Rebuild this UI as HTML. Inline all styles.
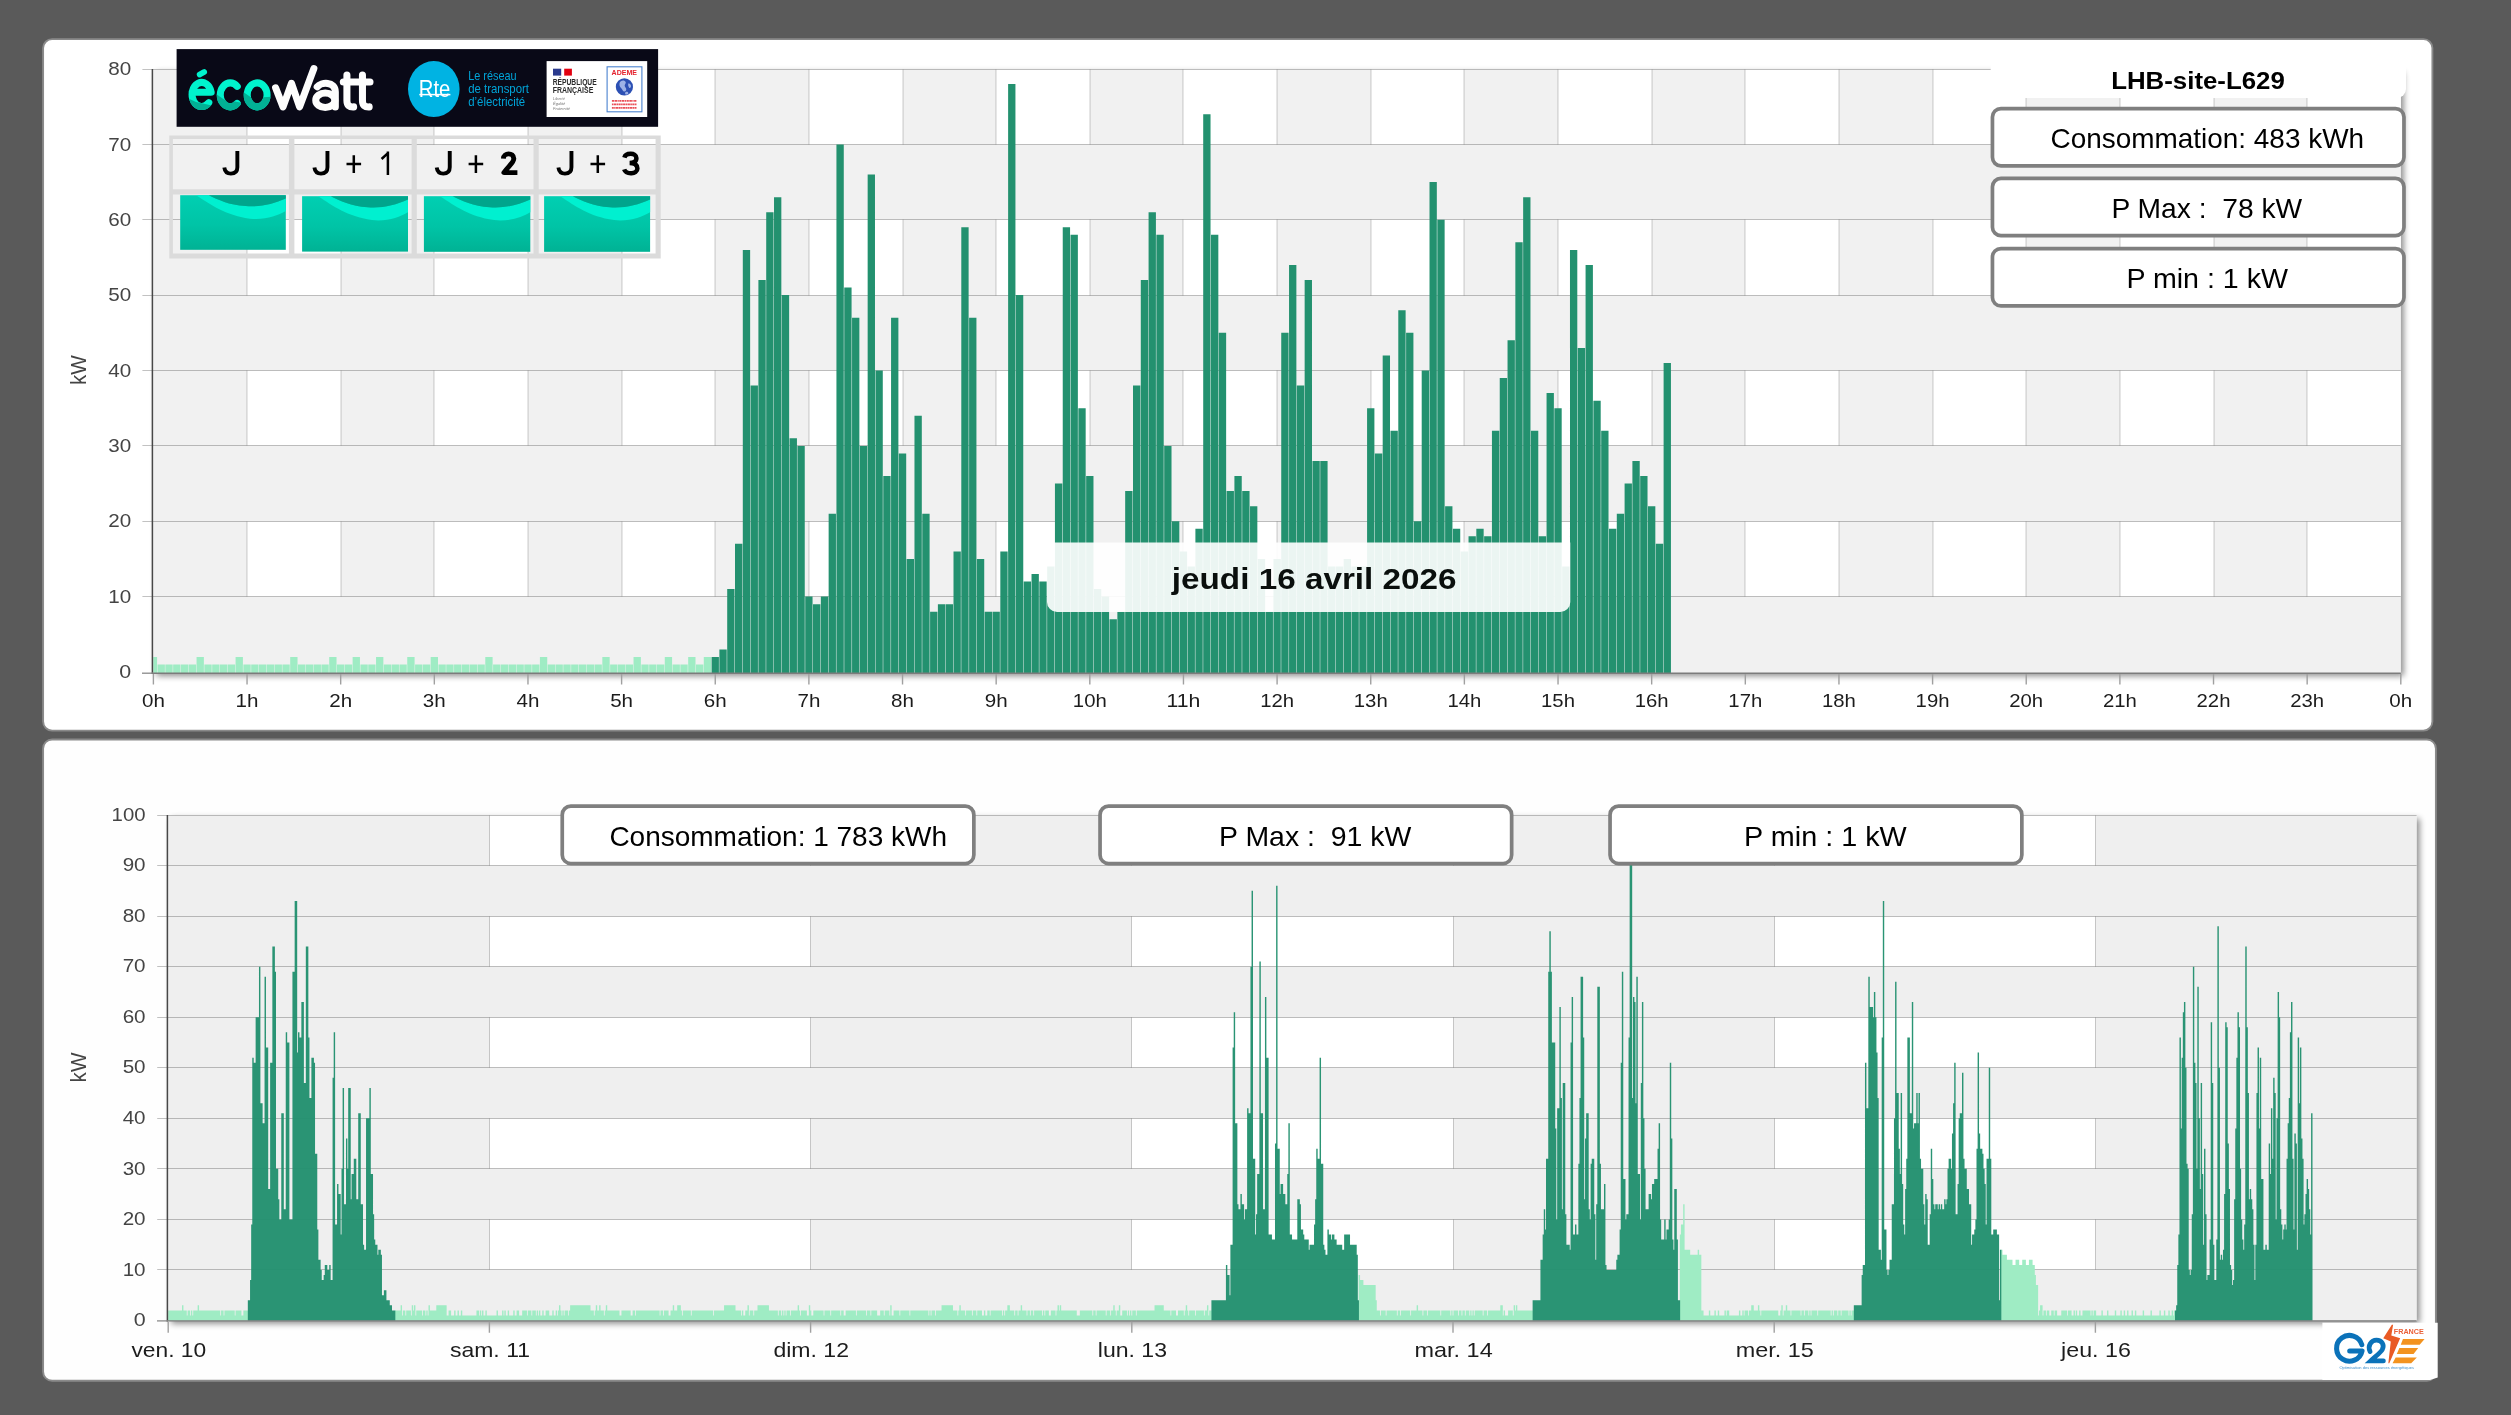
<!DOCTYPE html>
<html><head><meta charset="utf-8"><title>LHB-site-L629</title>
<style>
html,body{margin:0;padding:0;background:#5a5a5a;}
body{width:2511px;height:1415px;overflow:hidden;position:relative;font-family:"Liberation Sans",sans-serif;}
svg{position:absolute;left:0;top:0;display:block;will-change:transform}
</style></head><body>
<svg width="2511" height="1415" viewBox="0 0 2511 1415" font-family="Liberation Sans, sans-serif">
<defs>
<filter id="sh" x="-2%" y="-4%" width="104%" height="110%"><feGaussianBlur in="SourceAlpha" stdDeviation="3.4"/><feOffset dx="3" dy="3"/><feComponentTransfer><feFuncA type="linear" slope="0.45"/></feComponentTransfer><feMerge><feMergeNode/><feMergeNode in="SourceGraphic"/></feMerge></filter>
</defs>
<rect width="2511" height="1415" fill="#5a5a5a"/>

<rect x="43.1" y="39.1" width="2389.3" height="691.5" rx="9" fill="#fff" stroke="#8a8a8a" stroke-width="1.9"/>
<rect x="43.1" y="739.5" width="2392.8" height="641.3" rx="9" fill="#fefefe" stroke="#8a8a8a" stroke-width="1.9"/>
<g id="topgrid">
<rect x="153.4" y="69.5" width="2247.4" height="603.5" fill="#f1f1f1" filter="url(#sh)"/>
<path d="M247,69.5H341V144.5H247zM434,69.5H528V144.5H434zM622,69.5H715V144.5H622zM809,69.5H903V144.5H809zM996,69.5H1090V144.5H996zM1183,69.5H1277V144.5H1183zM1371,69.5H1464V144.5H1371zM1558,69.5H1652V144.5H1558zM1745,69.5H1839V144.5H1745zM1933,69.5H2026V144.5H1933zM2120,69.5H2214V144.5H2120zM2307,69.5H2400.8V144.5H2307zM247,219.5H341V295.5H247zM434,219.5H528V295.5H434zM622,219.5H715V295.5H622zM809,219.5H903V295.5H809zM996,219.5H1090V295.5H996zM1183,219.5H1277V295.5H1183zM1371,219.5H1464V295.5H1371zM1558,219.5H1652V295.5H1558zM1745,219.5H1839V295.5H1745zM1933,219.5H2026V295.5H1933zM2120,219.5H2214V295.5H2120zM2307,219.5H2400.8V295.5H2307zM247,370.5H341V445.5H247zM434,370.5H528V445.5H434zM622,370.5H715V445.5H622zM809,370.5H903V445.5H809zM996,370.5H1090V445.5H996zM1183,370.5H1277V445.5H1183zM1371,370.5H1464V445.5H1371zM1558,370.5H1652V445.5H1558zM1745,370.5H1839V445.5H1745zM1933,370.5H2026V445.5H1933zM2120,370.5H2214V445.5H2120zM2307,370.5H2400.8V445.5H2307zM247,521.5H341V596.5H247zM434,521.5H528V596.5H434zM622,521.5H715V596.5H622zM809,521.5H903V596.5H809zM996,521.5H1090V596.5H996zM1183,521.5H1277V596.5H1183zM1371,521.5H1464V596.5H1371zM1558,521.5H1652V596.5H1558zM1745,521.5H1839V596.5H1745zM1933,521.5H2026V596.5H1933zM2120,521.5H2214V596.5H2120zM2307,521.5H2400.8V596.5H2307z" fill="#fff"/>
<path d="M247,69.5V144.5M341,69.5V144.5M434,69.5V144.5M528,69.5V144.5M622,69.5V144.5M715,69.5V144.5M809,69.5V144.5M903,69.5V144.5M996,69.5V144.5M1090,69.5V144.5M1183,69.5V144.5M1277,69.5V144.5M1371,69.5V144.5M1464,69.5V144.5M1558,69.5V144.5M1652,69.5V144.5M1745,69.5V144.5M1839,69.5V144.5M1933,69.5V144.5M2026,69.5V144.5M2120,69.5V144.5M2214,69.5V144.5M2307,69.5V144.5M247,219.5V295.5M341,219.5V295.5M434,219.5V295.5M528,219.5V295.5M622,219.5V295.5M715,219.5V295.5M809,219.5V295.5M903,219.5V295.5M996,219.5V295.5M1090,219.5V295.5M1183,219.5V295.5M1277,219.5V295.5M1371,219.5V295.5M1464,219.5V295.5M1558,219.5V295.5M1652,219.5V295.5M1745,219.5V295.5M1839,219.5V295.5M1933,219.5V295.5M2026,219.5V295.5M2120,219.5V295.5M2214,219.5V295.5M2307,219.5V295.5M247,370.5V445.5M341,370.5V445.5M434,370.5V445.5M528,370.5V445.5M622,370.5V445.5M715,370.5V445.5M809,370.5V445.5M903,370.5V445.5M996,370.5V445.5M1090,370.5V445.5M1183,370.5V445.5M1277,370.5V445.5M1371,370.5V445.5M1464,370.5V445.5M1558,370.5V445.5M1652,370.5V445.5M1745,370.5V445.5M1839,370.5V445.5M1933,370.5V445.5M2026,370.5V445.5M2120,370.5V445.5M2214,370.5V445.5M2307,370.5V445.5M247,521.5V596.5M341,521.5V596.5M434,521.5V596.5M528,521.5V596.5M622,521.5V596.5M715,521.5V596.5M809,521.5V596.5M903,521.5V596.5M996,521.5V596.5M1090,521.5V596.5M1183,521.5V596.5M1277,521.5V596.5M1371,521.5V596.5M1464,521.5V596.5M1558,521.5V596.5M1652,521.5V596.5M1745,521.5V596.5M1839,521.5V596.5M1933,521.5V596.5M2026,521.5V596.5M2120,521.5V596.5M2214,521.5V596.5M2307,521.5V596.5" stroke="#000" stroke-opacity="0.2" stroke-width="1" fill="none"/>
<path d="M142.40,69.5H2400.80M142.40,144.5H2400.80M142.40,219.5H2400.80M142.40,295.5H2400.80M142.40,370.5H2400.80M142.40,445.5H2400.80M142.40,521.5H2400.80M142.40,596.5H2400.80" stroke="#000" stroke-opacity="0.24" stroke-width="1" fill="none"/>
</g>
<path d="M153.30,673.0V656.92H157.06V673.0zM157.54,673.0V664.46H164.87V673.0zM165.35,673.0V664.46H172.67V673.0zM173.15,673.0V664.46H180.47V673.0zM180.95,673.0V664.46H188.28V673.0zM188.76,673.0V664.46H196.08V673.0zM196.56,673.0V656.92H203.88V673.0zM204.36,673.0V664.46H211.69V673.0zM212.17,673.0V664.46H219.49V673.0zM219.97,673.0V664.46H227.29V673.0zM227.77,673.0V664.46H235.10V673.0zM235.58,673.0V656.92H242.90V673.0zM243.38,673.0V664.46H250.70V673.0zM251.18,673.0V664.46H258.51V673.0zM258.99,673.0V664.46H266.31V673.0zM266.79,673.0V664.46H274.11V673.0zM274.59,673.0V664.46H281.92V673.0zM282.40,673.0V664.46H289.72V673.0zM290.20,673.0V656.92H297.52V673.0zM298.00,673.0V664.46H305.33V673.0zM305.81,673.0V664.46H313.13V673.0zM313.61,673.0V664.46H320.93V673.0zM321.41,673.0V664.46H328.74V673.0zM329.22,673.0V656.92H336.54V673.0zM337.02,673.0V664.46H344.35V673.0zM344.83,673.0V664.46H352.15V673.0zM352.63,673.0V656.92H359.95V673.0zM360.43,673.0V664.46H367.76V673.0zM368.24,673.0V664.46H375.56V673.0zM376.04,673.0V656.92H383.36V673.0zM383.84,673.0V664.46H391.17V673.0zM391.65,673.0V664.46H398.97V673.0zM399.45,673.0V664.46H406.77V673.0zM407.25,673.0V656.92H414.58V673.0zM415.06,673.0V664.46H422.38V673.0zM422.86,673.0V664.46H430.18V673.0zM430.66,673.0V656.92H437.99V673.0zM438.47,673.0V664.46H445.79V673.0zM446.27,673.0V664.46H453.59V673.0zM454.07,673.0V664.46H461.40V673.0zM461.88,673.0V664.46H469.20V673.0zM469.68,673.0V664.46H477.00V673.0zM477.48,673.0V664.46H484.81V673.0zM485.29,673.0V656.92H492.61V673.0zM493.09,673.0V664.46H500.41V673.0zM500.89,673.0V664.46H508.22V673.0zM508.70,673.0V664.46H516.02V673.0zM516.50,673.0V664.46H523.82V673.0zM524.30,673.0V664.46H531.63V673.0zM532.11,673.0V664.46H539.43V673.0zM539.91,673.0V656.92H547.24V673.0zM547.72,673.0V664.46H555.04V673.0zM555.52,673.0V664.46H562.84V673.0zM563.32,673.0V664.46H570.65V673.0zM571.13,673.0V664.46H578.45V673.0zM578.93,673.0V664.46H586.25V673.0zM586.73,673.0V664.46H594.06V673.0zM594.54,673.0V664.46H601.86V673.0zM602.34,673.0V656.92H609.66V673.0zM610.14,673.0V664.46H617.47V673.0zM617.95,673.0V664.46H625.27V673.0zM625.75,673.0V664.46H633.07V673.0zM633.55,673.0V656.92H640.88V673.0zM641.36,673.0V664.46H648.68V673.0zM649.16,673.0V664.46H656.48V673.0zM656.96,673.0V664.46H664.29V673.0zM664.77,673.0V656.92H672.09V673.0zM672.57,673.0V664.46H679.89V673.0zM680.37,673.0V664.46H687.70V673.0zM688.18,673.0V656.92H695.50V673.0zM695.98,673.0V664.46H703.30V673.0zM703.78,673.0V656.92H711.11V673.0z" fill="#9fecc4"/>
<path d="M711.59,673.0V656.92H718.91V673.0zM719.39,673.0V649.39H726.72V673.0zM727.20,673.0V589.09H734.52V673.0zM735.00,673.0V543.86H742.32V673.0zM742.80,673.0V249.90H750.13V673.0zM750.61,673.0V385.57H757.93V673.0zM758.41,673.0V280.05H765.73V673.0zM766.21,673.0V212.21H773.54V673.0zM774.02,673.0V197.14H781.34V673.0zM781.82,673.0V295.12H789.14V673.0zM789.62,673.0V438.34H796.95V673.0zM797.43,673.0V445.88H804.75V673.0zM805.23,673.0V596.62H812.55V673.0zM813.03,673.0V604.16H820.36V673.0zM820.84,673.0V596.62H828.16V673.0zM828.64,673.0V513.71H835.96V673.0zM836.44,673.0V144.38H843.77V673.0zM844.25,673.0V287.59H851.57V673.0zM852.05,673.0V317.74H859.37V673.0zM859.85,673.0V445.88H867.18V673.0zM867.66,673.0V174.53H874.98V673.0zM875.46,673.0V370.50H882.78V673.0zM883.26,673.0V476.02H890.59V673.0zM891.07,673.0V317.74H898.39V673.0zM898.87,673.0V453.41H906.20V673.0zM906.68,673.0V558.94H914.00V673.0zM914.48,673.0V415.73H921.80V673.0zM922.28,673.0V513.71H929.61V673.0zM930.09,673.0V611.70H937.41V673.0zM937.89,673.0V604.16H945.21V673.0zM945.69,673.0V604.16H953.02V673.0zM953.50,673.0V551.40H960.82V673.0zM961.30,673.0V227.29H968.62V673.0zM969.10,673.0V317.74H976.43V673.0zM976.91,673.0V558.94H984.23V673.0zM984.71,673.0V611.70H992.03V673.0zM992.51,673.0V611.70H999.84V673.0zM1000.32,673.0V551.40H1007.64V673.0zM1008.12,673.0V84.08H1015.44V673.0zM1015.92,673.0V295.12H1023.25V673.0zM1023.73,673.0V581.55H1031.05V673.0zM1031.53,673.0V574.01H1038.85V673.0zM1039.33,673.0V581.55H1046.66V673.0zM1047.14,673.0V566.48H1054.46V673.0zM1054.94,673.0V483.56H1062.26V673.0zM1062.74,673.0V227.29H1070.07V673.0zM1070.55,673.0V234.83H1077.87V673.0zM1078.35,673.0V408.19H1085.67V673.0zM1086.15,673.0V476.02H1093.48V673.0zM1093.96,673.0V589.09H1101.28V673.0zM1101.76,673.0V596.62H1109.09V673.0zM1109.57,673.0V619.24H1116.89V673.0zM1117.37,673.0V611.70H1124.69V673.0zM1125.17,673.0V491.10H1132.50V673.0zM1132.98,673.0V385.57H1140.30V673.0zM1140.78,673.0V280.05H1148.10V673.0zM1148.58,673.0V212.21H1155.91V673.0zM1156.39,673.0V234.83H1163.71V673.0zM1164.19,673.0V445.88H1171.51V673.0zM1171.99,673.0V521.25H1179.32V673.0zM1179.80,673.0V551.40H1187.12V673.0zM1187.60,673.0V566.48H1194.92V673.0zM1195.40,673.0V528.79H1202.73V673.0zM1203.21,673.0V114.23H1210.53V673.0zM1211.01,673.0V234.83H1218.33V673.0zM1218.81,673.0V332.81H1226.14V673.0zM1226.62,673.0V491.10H1233.94V673.0zM1234.42,673.0V476.02H1241.74V673.0zM1242.22,673.0V491.10H1249.55V673.0zM1250.03,673.0V506.18H1257.35V673.0zM1257.83,673.0V558.94H1265.15V673.0zM1265.63,673.0V611.70H1272.96V673.0zM1273.44,673.0V558.94H1280.76V673.0zM1281.24,673.0V332.81H1288.57V673.0zM1289.05,673.0V264.98H1296.37V673.0zM1296.85,673.0V385.57H1304.17V673.0zM1304.65,673.0V280.05H1311.98V673.0zM1312.46,673.0V460.95H1319.78V673.0zM1320.26,673.0V460.95H1327.58V673.0zM1328.06,673.0V566.48H1335.39V673.0zM1335.87,673.0V566.48H1343.19V673.0zM1343.67,673.0V558.94H1350.99V673.0zM1351.47,673.0V566.48H1358.80V673.0zM1359.28,673.0V566.48H1366.60V673.0zM1367.08,673.0V408.19H1374.40V673.0zM1374.88,673.0V453.41H1382.21V673.0zM1382.69,673.0V355.43H1390.01V673.0zM1390.49,673.0V430.80H1397.81V673.0zM1398.29,673.0V310.20H1405.62V673.0zM1406.10,673.0V332.81H1413.42V673.0zM1413.90,673.0V521.25H1421.22V673.0zM1421.70,673.0V370.50H1429.03V673.0zM1429.51,673.0V182.06H1436.83V673.0zM1437.31,673.0V219.75H1444.63V673.0zM1445.11,673.0V506.18H1452.44V673.0zM1452.92,673.0V528.79H1460.24V673.0zM1460.72,673.0V551.40H1468.05V673.0zM1468.53,673.0V536.33H1475.85V673.0zM1476.33,673.0V528.79H1483.65V673.0zM1484.13,673.0V536.33H1491.46V673.0zM1491.94,673.0V430.80H1499.26V673.0zM1499.74,673.0V378.04H1507.06V673.0zM1507.54,673.0V340.35H1514.87V673.0zM1515.35,673.0V242.36H1522.67V673.0zM1523.15,673.0V197.14H1530.47V673.0zM1530.95,673.0V430.80H1538.28V673.0zM1538.76,673.0V536.33H1546.08V673.0zM1546.56,673.0V393.11H1553.88V673.0zM1554.36,673.0V408.19H1561.69V673.0zM1562.17,673.0V566.48H1569.49V673.0zM1569.97,673.0V249.90H1577.29V673.0zM1577.77,673.0V347.89H1585.10V673.0zM1585.58,673.0V264.98H1592.90V673.0zM1593.38,673.0V400.65H1600.70V673.0zM1601.18,673.0V430.80H1608.51V673.0zM1608.99,673.0V528.79H1616.31V673.0zM1616.79,673.0V513.71H1624.11V673.0zM1624.59,673.0V483.56H1631.92V673.0zM1632.40,673.0V460.95H1639.72V673.0zM1640.20,673.0V476.02H1647.52V673.0zM1648.00,673.0V506.18H1655.33V673.0zM1655.81,673.0V543.86H1663.13V673.0zM1663.61,673.0V362.96H1670.94V673.0z" fill="#23916f"/>
<path d="M152.4,69.0V673.7" stroke="#484848" stroke-width="1.5" fill="none"/>
<path d="M142,673.2H153" stroke="#8a8a8a" stroke-width="1.3" fill="none"/>
<path d="M151.7,673.2H2400.8" stroke="#7c7c7c" stroke-width="1.4" fill="none"/>
<path d="M153.40,674.0v10.5M247.04,674.0v10.5M340.68,674.0v10.5M434.33,674.0v10.5M527.97,674.0v10.5M621.61,674.0v10.5M715.25,674.0v10.5M808.89,674.0v10.5M902.53,674.0v10.5M996.17,674.0v10.5M1089.82,674.0v10.5M1183.46,674.0v10.5M1277.10,674.0v10.5M1370.74,674.0v10.5M1464.38,674.0v10.5M1558.03,674.0v10.5M1651.67,674.0v10.5M1745.31,674.0v10.5M1838.95,674.0v10.5M1932.59,674.0v10.5M2026.23,674.0v10.5M2119.88,674.0v10.5M2213.52,674.0v10.5M2307.16,674.0v10.5M2400.80,674.0v10.5" stroke="#a0a0a0" stroke-width="1.4" fill="none"/>
<text x="153.40" y="707.00" font-size="17.8" text-anchor="middle" fill="#1c1c1c" textLength="22.89" lengthAdjust="spacingAndGlyphs">0h</text>
<text x="247.04" y="707.00" font-size="17.8" text-anchor="middle" fill="#1c1c1c" textLength="22.89" lengthAdjust="spacingAndGlyphs">1h</text>
<text x="340.68" y="707.00" font-size="17.8" text-anchor="middle" fill="#1c1c1c" textLength="22.89" lengthAdjust="spacingAndGlyphs">2h</text>
<text x="434.33" y="707.00" font-size="17.8" text-anchor="middle" fill="#1c1c1c" textLength="22.89" lengthAdjust="spacingAndGlyphs">3h</text>
<text x="527.97" y="707.00" font-size="17.8" text-anchor="middle" fill="#1c1c1c" textLength="22.89" lengthAdjust="spacingAndGlyphs">4h</text>
<text x="621.61" y="707.00" font-size="17.8" text-anchor="middle" fill="#1c1c1c" textLength="22.89" lengthAdjust="spacingAndGlyphs">5h</text>
<text x="715.25" y="707.00" font-size="17.8" text-anchor="middle" fill="#1c1c1c" textLength="22.89" lengthAdjust="spacingAndGlyphs">6h</text>
<text x="808.89" y="707.00" font-size="17.8" text-anchor="middle" fill="#1c1c1c" textLength="22.89" lengthAdjust="spacingAndGlyphs">7h</text>
<text x="902.53" y="707.00" font-size="17.8" text-anchor="middle" fill="#1c1c1c" textLength="22.89" lengthAdjust="spacingAndGlyphs">8h</text>
<text x="996.17" y="707.00" font-size="17.8" text-anchor="middle" fill="#1c1c1c" textLength="22.89" lengthAdjust="spacingAndGlyphs">9h</text>
<text x="1089.82" y="707.00" font-size="17.8" text-anchor="middle" fill="#1c1c1c" textLength="33.91" lengthAdjust="spacingAndGlyphs">10h</text>
<text x="1183.46" y="707.00" font-size="17.8" text-anchor="middle" fill="#1c1c1c" textLength="33.91" lengthAdjust="spacingAndGlyphs">11h</text>
<text x="1277.10" y="707.00" font-size="17.8" text-anchor="middle" fill="#1c1c1c" textLength="33.91" lengthAdjust="spacingAndGlyphs">12h</text>
<text x="1370.74" y="707.00" font-size="17.8" text-anchor="middle" fill="#1c1c1c" textLength="33.91" lengthAdjust="spacingAndGlyphs">13h</text>
<text x="1464.38" y="707.00" font-size="17.8" text-anchor="middle" fill="#1c1c1c" textLength="33.91" lengthAdjust="spacingAndGlyphs">14h</text>
<text x="1558.03" y="707.00" font-size="17.8" text-anchor="middle" fill="#1c1c1c" textLength="33.91" lengthAdjust="spacingAndGlyphs">15h</text>
<text x="1651.67" y="707.00" font-size="17.8" text-anchor="middle" fill="#1c1c1c" textLength="33.91" lengthAdjust="spacingAndGlyphs">16h</text>
<text x="1745.31" y="707.00" font-size="17.8" text-anchor="middle" fill="#1c1c1c" textLength="33.91" lengthAdjust="spacingAndGlyphs">17h</text>
<text x="1838.95" y="707.00" font-size="17.8" text-anchor="middle" fill="#1c1c1c" textLength="33.91" lengthAdjust="spacingAndGlyphs">18h</text>
<text x="1932.59" y="707.00" font-size="17.8" text-anchor="middle" fill="#1c1c1c" textLength="33.91" lengthAdjust="spacingAndGlyphs">19h</text>
<text x="2026.23" y="707.00" font-size="17.8" text-anchor="middle" fill="#1c1c1c" textLength="33.91" lengthAdjust="spacingAndGlyphs">20h</text>
<text x="2119.88" y="707.00" font-size="17.8" text-anchor="middle" fill="#1c1c1c" textLength="33.91" lengthAdjust="spacingAndGlyphs">21h</text>
<text x="2213.52" y="707.00" font-size="17.8" text-anchor="middle" fill="#1c1c1c" textLength="33.91" lengthAdjust="spacingAndGlyphs">22h</text>
<text x="2307.16" y="707.00" font-size="17.8" text-anchor="middle" fill="#1c1c1c" textLength="33.91" lengthAdjust="spacingAndGlyphs">23h</text>
<text x="2400.80" y="707.00" font-size="17.8" text-anchor="middle" fill="#1c1c1c" textLength="22.89" lengthAdjust="spacingAndGlyphs">0h</text>
<text x="131.20" y="678.20" font-size="17.8" text-anchor="end" fill="#444" textLength="11.92" lengthAdjust="spacingAndGlyphs">0</text>
<text x="131.20" y="602.83" font-size="17.8" text-anchor="end" fill="#444" textLength="22.94" lengthAdjust="spacingAndGlyphs">10</text>
<text x="131.20" y="527.45" font-size="17.8" text-anchor="end" fill="#444" textLength="22.94" lengthAdjust="spacingAndGlyphs">20</text>
<text x="131.20" y="452.07" font-size="17.8" text-anchor="end" fill="#444" textLength="22.94" lengthAdjust="spacingAndGlyphs">30</text>
<text x="131.20" y="376.70" font-size="17.8" text-anchor="end" fill="#444" textLength="22.94" lengthAdjust="spacingAndGlyphs">40</text>
<text x="131.20" y="301.32" font-size="17.8" text-anchor="end" fill="#444" textLength="22.94" lengthAdjust="spacingAndGlyphs">50</text>
<text x="131.20" y="225.95" font-size="17.8" text-anchor="end" fill="#444" textLength="22.94" lengthAdjust="spacingAndGlyphs">60</text>
<text x="131.20" y="150.57" font-size="17.8" text-anchor="end" fill="#444" textLength="22.94" lengthAdjust="spacingAndGlyphs">70</text>
<text x="131.20" y="75.20" font-size="17.8" text-anchor="end" fill="#444" textLength="22.94" lengthAdjust="spacingAndGlyphs">80</text>
<text transform="translate(85.9,370.2) rotate(-90)" font-size="22" text-anchor="middle" fill="#444" textLength="29.8" lengthAdjust="spacingAndGlyphs">kW</text>
<path d="M1047,542.5H1570.3V602a10,10 0 0 1 -10,10H1057a10,10 0 0 1 -10,-10z" fill="#fff" fill-opacity="0.91"/>
<text x="1314.20" y="588.70" font-size="30.3" text-anchor="middle" fill="#0a0f0d" font-weight="bold" textLength="284.80" lengthAdjust="spacingAndGlyphs">jeudi 16 avril 2026</text>
<g id="botgrid">
<rect x="168.2" y="815.5" width="2248.4" height="505.20000000000005" fill="#efefef" filter="url(#sh)"/>
<path d="M489.5,815.5H810.5V865.5H489.5zM1131.5,815.5H1453.5V865.5H1131.5zM1774.5,815.5H2095.5V865.5H1774.5zM489.5,916.5H810.5V966.5H489.5zM1131.5,916.5H1453.5V966.5H1131.5zM1774.5,916.5H2095.5V966.5H1774.5zM489.5,1017.5H810.5V1067.5H489.5zM1131.5,1017.5H1453.5V1067.5H1131.5zM1774.5,1017.5H2095.5V1067.5H1774.5zM489.5,1118.5H810.5V1168.5H489.5zM1131.5,1118.5H1453.5V1168.5H1131.5zM1774.5,1118.5H2095.5V1168.5H1774.5zM489.5,1219.5H810.5V1269.5H489.5zM1131.5,1219.5H1453.5V1269.5H1131.5zM1774.5,1219.5H2095.5V1269.5H1774.5z" fill="#fff"/>
<path d="M489.5,815.5V865.5M810.5,815.5V865.5M1131.5,815.5V865.5M1453.5,815.5V865.5M1774.5,815.5V865.5M2095.5,815.5V865.5M489.5,916.5V966.5M810.5,916.5V966.5M1131.5,916.5V966.5M1453.5,916.5V966.5M1774.5,916.5V966.5M2095.5,916.5V966.5M489.5,1017.5V1067.5M810.5,1017.5V1067.5M1131.5,1017.5V1067.5M1453.5,1017.5V1067.5M1774.5,1017.5V1067.5M2095.5,1017.5V1067.5M489.5,1118.5V1168.5M810.5,1118.5V1168.5M1131.5,1118.5V1168.5M1453.5,1118.5V1168.5M1774.5,1118.5V1168.5M2095.5,1118.5V1168.5M489.5,1219.5V1269.5M810.5,1219.5V1269.5M1131.5,1219.5V1269.5M1453.5,1219.5V1269.5M1774.5,1219.5V1269.5M2095.5,1219.5V1269.5" stroke="#000" stroke-opacity="0.2" stroke-width="1" fill="none"/>
<path d="M157.20,815.5H2416.60M157.20,865.5H2416.60M157.20,916.5H2416.60M157.20,966.5H2416.60M157.20,1017.5H2416.60M157.20,1067.5H2416.60M157.20,1118.5H2416.60M157.20,1168.5H2416.60M157.20,1219.5H2416.60M157.20,1269.5H2416.60" stroke="#000" stroke-opacity="0.24" stroke-width="1" fill="none"/>
</g>
<path d="M168.20,1320.7V1310.39H168.94V1320.7zM168.64,1320.7V1310.39H170.05V1320.7zM169.75,1320.7V1310.39H171.17V1320.7zM170.87,1320.7V1310.39H172.28V1320.7zM171.98,1320.7V1310.39H173.40V1320.7zM173.10,1320.7V1310.39H174.51V1320.7zM174.21,1320.7V1310.39H175.63V1320.7zM175.33,1320.7V1310.39H176.74V1320.7zM176.44,1320.7V1310.39H177.86V1320.7zM177.56,1320.7V1310.39H178.98V1320.7zM178.68,1320.7V1310.39H180.09V1320.7zM179.79,1320.7V1310.39H181.21V1320.7zM180.91,1320.7V1310.39H182.32V1320.7zM182.02,1320.7V1305.34H183.44V1320.7zM183.14,1320.7V1310.39H184.55V1320.7zM184.25,1320.7V1310.39H185.67V1320.7zM185.37,1320.7V1310.39H186.78V1320.7zM186.48,1320.7V1315.44H187.90V1320.7zM187.60,1320.7V1310.39H189.01V1320.7zM188.71,1320.7V1310.39H190.13V1320.7zM189.83,1320.7V1315.44H191.24V1320.7zM190.94,1320.7V1310.39H192.36V1320.7zM192.06,1320.7V1315.44H193.47V1320.7zM193.17,1320.7V1310.39H194.59V1320.7zM194.29,1320.7V1310.39H195.70V1320.7zM195.40,1320.7V1310.39H196.82V1320.7zM196.52,1320.7V1310.39H197.93V1320.7zM197.63,1320.7V1305.34H199.05V1320.7zM198.75,1320.7V1310.39H200.17V1320.7zM199.87,1320.7V1310.39H201.28V1320.7zM200.98,1320.7V1310.39H202.40V1320.7zM202.10,1320.7V1310.39H203.51V1320.7zM203.21,1320.7V1310.39H204.63V1320.7zM204.33,1320.7V1310.39H205.74V1320.7zM205.44,1320.7V1310.39H206.86V1320.7zM206.56,1320.7V1310.39H207.97V1320.7zM207.67,1320.7V1310.39H209.09V1320.7zM208.79,1320.7V1310.39H210.20V1320.7zM209.90,1320.7V1310.39H211.32V1320.7zM211.02,1320.7V1310.39H212.43V1320.7zM212.13,1320.7V1310.39H213.55V1320.7zM213.25,1320.7V1310.39H214.66V1320.7zM214.36,1320.7V1310.39H215.78V1320.7zM215.48,1320.7V1310.39H216.89V1320.7zM216.59,1320.7V1310.39H218.01V1320.7zM217.71,1320.7V1310.39H219.13V1320.7zM218.83,1320.7V1310.39H220.24V1320.7zM219.94,1320.7V1315.44H221.36V1320.7zM221.06,1320.7V1310.39H222.47V1320.7zM222.17,1320.7V1310.39H223.59V1320.7zM223.29,1320.7V1315.44H224.70V1320.7zM224.40,1320.7V1310.39H225.82V1320.7zM225.52,1320.7V1310.39H226.93V1320.7zM226.63,1320.7V1310.39H228.05V1320.7zM227.75,1320.7V1310.39H229.16V1320.7zM228.86,1320.7V1310.39H230.28V1320.7zM229.98,1320.7V1310.39H231.39V1320.7zM231.09,1320.7V1310.39H232.51V1320.7zM232.21,1320.7V1310.39H233.62V1320.7zM233.32,1320.7V1310.39H234.74V1320.7zM234.44,1320.7V1315.44H235.85V1320.7zM235.55,1320.7V1310.39H236.97V1320.7zM236.67,1320.7V1310.39H238.08V1320.7zM237.78,1320.7V1310.39H239.20V1320.7zM238.90,1320.7V1310.39H240.32V1320.7zM240.02,1320.7V1310.39H241.43V1320.7zM241.13,1320.7V1315.44H242.55V1320.7zM242.25,1320.7V1315.44H243.66V1320.7zM243.36,1320.7V1310.39H244.78V1320.7zM244.48,1320.7V1310.39H245.89V1320.7zM245.59,1320.7V1310.39H247.01V1320.7zM246.71,1320.7V1310.39H248.12V1320.7zM395.04,1320.7V1310.39H396.45V1320.7zM396.15,1320.7V1310.39H397.57V1320.7zM397.27,1320.7V1310.39H398.68V1320.7zM398.38,1320.7V1310.39H399.80V1320.7zM399.50,1320.7V1310.39H400.92V1320.7zM400.62,1320.7V1305.34H402.03V1320.7zM401.73,1320.7V1315.44H403.15V1320.7zM402.85,1320.7V1310.39H404.26V1320.7zM403.96,1320.7V1310.39H405.38V1320.7zM405.08,1320.7V1315.44H406.49V1320.7zM406.19,1320.7V1310.39H407.61V1320.7zM407.31,1320.7V1310.39H408.72V1320.7zM408.42,1320.7V1310.39H409.84V1320.7zM409.54,1320.7V1310.39H410.95V1320.7zM410.65,1320.7V1315.44H412.07V1320.7zM411.77,1320.7V1305.34H413.18V1320.7zM412.88,1320.7V1310.39H414.30V1320.7zM414.00,1320.7V1305.34H415.41V1320.7zM415.11,1320.7V1315.44H416.53V1320.7zM416.23,1320.7V1310.39H417.64V1320.7zM417.34,1320.7V1310.39H418.76V1320.7zM418.46,1320.7V1310.39H419.88V1320.7zM419.58,1320.7V1310.39H420.99V1320.7zM420.69,1320.7V1310.39H422.11V1320.7zM421.81,1320.7V1315.44H423.22V1320.7zM422.92,1320.7V1310.39H424.34V1320.7zM424.04,1320.7V1310.39H425.45V1320.7zM425.15,1320.7V1315.44H426.57V1320.7zM426.27,1320.7V1310.39H427.68V1320.7zM427.38,1320.7V1315.44H428.80V1320.7zM428.50,1320.7V1305.34H429.91V1320.7zM429.61,1320.7V1310.39H431.03V1320.7zM430.73,1320.7V1310.39H432.14V1320.7zM431.84,1320.7V1310.39H433.26V1320.7zM432.96,1320.7V1310.39H434.37V1320.7zM434.07,1320.7V1310.39H435.49V1320.7zM435.19,1320.7V1310.39H436.60V1320.7zM436.30,1320.7V1305.34H437.72V1320.7zM437.42,1320.7V1305.34H438.83V1320.7zM438.53,1320.7V1305.34H439.95V1320.7zM439.65,1320.7V1305.34H441.07V1320.7zM440.77,1320.7V1305.34H442.18V1320.7zM441.88,1320.7V1305.34H443.30V1320.7zM443.00,1320.7V1305.34H444.41V1320.7zM444.11,1320.7V1305.34H445.53V1320.7zM445.23,1320.7V1305.34H446.64V1320.7zM446.34,1320.7V1315.44H447.76V1320.7zM447.46,1320.7V1315.44H448.87V1320.7zM448.57,1320.7V1310.39H449.99V1320.7zM449.69,1320.7V1310.39H451.10V1320.7zM450.80,1320.7V1315.44H452.22V1320.7zM451.92,1320.7V1315.44H453.33V1320.7zM453.03,1320.7V1315.44H454.45V1320.7zM454.15,1320.7V1310.39H455.56V1320.7zM455.26,1320.7V1315.44H456.68V1320.7zM456.38,1320.7V1315.44H457.79V1320.7zM457.49,1320.7V1310.39H458.91V1320.7zM458.61,1320.7V1315.44H460.03V1320.7zM459.73,1320.7V1315.44H461.14V1320.7zM460.84,1320.7V1310.39H462.26V1320.7zM461.96,1320.7V1315.44H463.37V1320.7zM463.07,1320.7V1315.44H464.49V1320.7zM464.19,1320.7V1315.44H465.60V1320.7zM465.30,1320.7V1315.44H466.72V1320.7zM466.42,1320.7V1315.44H467.83V1320.7zM467.53,1320.7V1315.44H468.95V1320.7zM468.65,1320.7V1315.44H470.06V1320.7zM469.76,1320.7V1315.44H471.18V1320.7zM470.88,1320.7V1315.44H472.29V1320.7zM471.99,1320.7V1315.44H473.41V1320.7zM473.11,1320.7V1315.44H474.52V1320.7zM474.22,1320.7V1315.44H475.64V1320.7zM475.34,1320.7V1315.44H476.75V1320.7zM476.45,1320.7V1310.39H477.87V1320.7zM477.57,1320.7V1310.39H478.98V1320.7zM478.68,1320.7V1315.44H480.10V1320.7zM479.80,1320.7V1310.39H481.22V1320.7zM480.92,1320.7V1315.44H482.33V1320.7zM482.03,1320.7V1310.39H483.45V1320.7zM483.15,1320.7V1315.44H484.56V1320.7zM484.26,1320.7V1315.44H485.68V1320.7zM485.38,1320.7V1310.39H486.79V1320.7zM486.49,1320.7V1315.44H487.91V1320.7zM487.61,1320.7V1315.44H489.02V1320.7zM488.72,1320.7V1315.44H490.14V1320.7zM489.84,1320.7V1315.44H491.25V1320.7zM490.95,1320.7V1315.44H492.37V1320.7zM492.07,1320.7V1315.44H493.48V1320.7zM493.18,1320.7V1315.44H494.60V1320.7zM494.30,1320.7V1315.44H495.71V1320.7zM495.41,1320.7V1315.44H496.83V1320.7zM496.53,1320.7V1310.39H497.94V1320.7zM497.64,1320.7V1315.44H499.06V1320.7zM498.76,1320.7V1315.44H500.18V1320.7zM499.88,1320.7V1315.44H501.29V1320.7zM500.99,1320.7V1315.44H502.41V1320.7zM502.11,1320.7V1310.39H503.52V1320.7zM503.22,1320.7V1315.44H504.64V1320.7zM504.34,1320.7V1310.39H505.75V1320.7zM505.45,1320.7V1315.44H506.87V1320.7zM506.57,1320.7V1315.44H507.98V1320.7zM507.68,1320.7V1310.39H509.10V1320.7zM508.80,1320.7V1315.44H510.21V1320.7zM509.91,1320.7V1315.44H511.33V1320.7zM511.03,1320.7V1315.44H512.44V1320.7zM512.14,1320.7V1315.44H513.56V1320.7zM513.26,1320.7V1310.39H514.67V1320.7zM514.37,1320.7V1315.44H515.79V1320.7zM515.49,1320.7V1315.44H516.90V1320.7zM516.60,1320.7V1310.39H518.02V1320.7zM517.72,1320.7V1310.39H519.13V1320.7zM518.83,1320.7V1315.44H520.25V1320.7zM519.95,1320.7V1315.44H521.37V1320.7zM521.07,1320.7V1315.44H522.48V1320.7zM522.18,1320.7V1310.39H523.60V1320.7zM523.30,1320.7V1310.39H524.71V1320.7zM524.41,1320.7V1310.39H525.83V1320.7zM525.53,1320.7V1310.39H526.94V1320.7zM526.64,1320.7V1315.44H528.06V1320.7zM527.76,1320.7V1310.39H529.17V1320.7zM528.87,1320.7V1310.39H530.29V1320.7zM529.99,1320.7V1310.39H531.40V1320.7zM531.10,1320.7V1315.44H532.52V1320.7zM532.22,1320.7V1310.39H533.63V1320.7zM533.33,1320.7V1310.39H534.75V1320.7zM534.45,1320.7V1310.39H535.86V1320.7zM535.56,1320.7V1315.44H536.98V1320.7zM536.68,1320.7V1310.39H538.09V1320.7zM537.79,1320.7V1315.44H539.21V1320.7zM538.91,1320.7V1310.39H540.33V1320.7zM540.03,1320.7V1315.44H541.44V1320.7zM541.14,1320.7V1315.44H542.56V1320.7zM542.26,1320.7V1310.39H543.67V1320.7zM543.37,1320.7V1315.44H544.79V1320.7zM544.49,1320.7V1315.44H545.90V1320.7zM545.60,1320.7V1310.39H547.02V1320.7zM546.72,1320.7V1310.39H548.13V1320.7zM547.83,1320.7V1310.39H549.25V1320.7zM548.95,1320.7V1315.44H550.36V1320.7zM550.06,1320.7V1315.44H551.48V1320.7zM551.18,1320.7V1315.44H552.59V1320.7zM552.29,1320.7V1310.39H553.71V1320.7zM553.41,1320.7V1315.44H554.82V1320.7zM554.52,1320.7V1315.44H555.94V1320.7zM555.64,1320.7V1310.39H557.05V1320.7zM556.75,1320.7V1315.44H558.17V1320.7zM557.87,1320.7V1310.39H559.28V1320.7zM558.98,1320.7V1305.34H560.40V1320.7zM560.10,1320.7V1310.39H561.52V1320.7zM561.22,1320.7V1315.44H562.63V1320.7zM562.33,1320.7V1310.39H563.75V1320.7zM563.45,1320.7V1315.44H564.86V1320.7zM564.56,1320.7V1310.39H565.98V1320.7zM565.68,1320.7V1310.39H567.09V1320.7zM566.79,1320.7V1310.39H568.21V1320.7zM567.91,1320.7V1315.44H569.32V1320.7zM569.02,1320.7V1310.39H570.44V1320.7zM570.14,1320.7V1305.34H571.55V1320.7zM571.25,1320.7V1305.34H572.67V1320.7zM572.37,1320.7V1305.34H573.78V1320.7zM573.48,1320.7V1305.34H574.90V1320.7zM574.60,1320.7V1305.34H576.01V1320.7zM575.71,1320.7V1305.34H577.13V1320.7zM576.83,1320.7V1305.34H578.24V1320.7zM577.94,1320.7V1305.34H579.36V1320.7zM579.06,1320.7V1305.34H580.48V1320.7zM580.18,1320.7V1305.34H581.59V1320.7zM581.29,1320.7V1305.34H582.71V1320.7zM582.41,1320.7V1305.34H583.82V1320.7zM583.52,1320.7V1305.34H584.94V1320.7zM584.64,1320.7V1305.34H586.05V1320.7zM585.75,1320.7V1305.34H587.17V1320.7zM586.87,1320.7V1305.34H588.28V1320.7zM587.98,1320.7V1305.34H589.40V1320.7zM589.10,1320.7V1305.34H590.51V1320.7zM590.21,1320.7V1310.39H591.63V1320.7zM591.33,1320.7V1310.39H592.74V1320.7zM592.44,1320.7V1310.39H593.86V1320.7zM593.56,1320.7V1315.44H594.97V1320.7zM594.67,1320.7V1310.39H596.09V1320.7zM595.79,1320.7V1305.34H597.20V1320.7zM596.90,1320.7V1310.39H598.32V1320.7zM598.02,1320.7V1310.39H599.43V1320.7zM599.13,1320.7V1305.34H600.55V1320.7zM600.25,1320.7V1310.39H601.67V1320.7zM601.37,1320.7V1310.39H602.78V1320.7zM602.48,1320.7V1310.39H603.90V1320.7zM603.60,1320.7V1315.44H605.01V1320.7zM604.71,1320.7V1310.39H606.13V1320.7zM605.83,1320.7V1305.34H607.24V1320.7zM606.94,1320.7V1310.39H608.36V1320.7zM608.06,1320.7V1310.39H609.47V1320.7zM609.17,1320.7V1310.39H610.59V1320.7zM610.29,1320.7V1310.39H611.70V1320.7zM611.40,1320.7V1310.39H612.82V1320.7zM612.52,1320.7V1310.39H613.93V1320.7zM613.63,1320.7V1310.39H615.05V1320.7zM614.75,1320.7V1310.39H616.16V1320.7zM615.86,1320.7V1310.39H617.28V1320.7zM616.98,1320.7V1310.39H618.39V1320.7zM618.09,1320.7V1310.39H619.51V1320.7zM619.21,1320.7V1315.44H620.63V1320.7zM620.33,1320.7V1315.44H621.74V1320.7zM621.44,1320.7V1310.39H622.86V1320.7zM622.56,1320.7V1310.39H623.97V1320.7zM623.67,1320.7V1310.39H625.09V1320.7zM624.79,1320.7V1310.39H626.20V1320.7zM625.90,1320.7V1310.39H627.32V1320.7zM627.02,1320.7V1310.39H628.43V1320.7zM628.13,1320.7V1310.39H629.55V1320.7zM629.25,1320.7V1310.39H630.66V1320.7zM630.36,1320.7V1315.44H631.78V1320.7zM631.48,1320.7V1315.44H632.89V1320.7zM632.59,1320.7V1310.39H634.01V1320.7zM633.71,1320.7V1310.39H635.12V1320.7zM634.82,1320.7V1315.44H636.24V1320.7zM635.94,1320.7V1310.39H637.35V1320.7zM637.05,1320.7V1310.39H638.47V1320.7zM638.17,1320.7V1310.39H639.58V1320.7zM639.28,1320.7V1310.39H640.70V1320.7zM640.40,1320.7V1310.39H641.82V1320.7zM641.52,1320.7V1310.39H642.93V1320.7zM642.63,1320.7V1310.39H644.05V1320.7zM643.75,1320.7V1310.39H645.16V1320.7zM644.86,1320.7V1310.39H646.28V1320.7zM645.98,1320.7V1310.39H647.39V1320.7zM647.09,1320.7V1310.39H648.51V1320.7zM648.21,1320.7V1310.39H649.62V1320.7zM649.32,1320.7V1310.39H650.74V1320.7zM650.44,1320.7V1310.39H651.85V1320.7zM651.55,1320.7V1310.39H652.97V1320.7zM652.67,1320.7V1310.39H654.08V1320.7zM653.78,1320.7V1310.39H655.20V1320.7zM654.90,1320.7V1310.39H656.31V1320.7zM656.01,1320.7V1310.39H657.43V1320.7zM657.13,1320.7V1310.39H658.54V1320.7zM658.24,1320.7V1310.39H659.66V1320.7zM659.36,1320.7V1315.44H660.78V1320.7zM660.48,1320.7V1310.39H661.89V1320.7zM661.59,1320.7V1310.39H663.01V1320.7zM662.71,1320.7V1315.44H664.12V1320.7zM663.82,1320.7V1310.39H665.24V1320.7zM664.94,1320.7V1310.39H666.35V1320.7zM666.05,1320.7V1310.39H667.47V1320.7zM667.17,1320.7V1310.39H668.58V1320.7zM668.28,1320.7V1315.44H669.70V1320.7zM669.40,1320.7V1315.44H670.81V1320.7zM670.51,1320.7V1310.39H671.93V1320.7zM671.63,1320.7V1310.39H673.04V1320.7zM672.74,1320.7V1305.34H674.16V1320.7zM673.86,1320.7V1310.39H675.27V1320.7zM674.97,1320.7V1310.39H676.39V1320.7zM676.09,1320.7V1310.39H677.50V1320.7zM677.20,1320.7V1305.34H678.62V1320.7zM678.32,1320.7V1305.34H679.73V1320.7zM679.43,1320.7V1305.34H680.85V1320.7zM680.55,1320.7V1310.39H681.97V1320.7zM681.67,1320.7V1315.44H683.08V1320.7zM682.78,1320.7V1310.39H684.20V1320.7zM683.90,1320.7V1310.39H685.31V1320.7zM685.01,1320.7V1310.39H686.43V1320.7zM686.13,1320.7V1310.39H687.54V1320.7zM687.24,1320.7V1310.39H688.66V1320.7zM688.36,1320.7V1310.39H689.77V1320.7zM689.47,1320.7V1310.39H690.89V1320.7zM690.59,1320.7V1315.44H692.00V1320.7zM691.70,1320.7V1310.39H693.12V1320.7zM692.82,1320.7V1310.39H694.23V1320.7zM693.93,1320.7V1310.39H695.35V1320.7zM695.05,1320.7V1310.39H696.46V1320.7zM696.16,1320.7V1310.39H697.58V1320.7zM697.28,1320.7V1310.39H698.69V1320.7zM698.39,1320.7V1310.39H699.81V1320.7zM699.51,1320.7V1310.39H700.93V1320.7zM700.63,1320.7V1310.39H702.04V1320.7zM701.74,1320.7V1310.39H703.16V1320.7zM702.86,1320.7V1310.39H704.27V1320.7zM703.97,1320.7V1310.39H705.39V1320.7zM705.09,1320.7V1310.39H706.50V1320.7zM706.20,1320.7V1310.39H707.62V1320.7zM707.32,1320.7V1310.39H708.73V1320.7zM708.43,1320.7V1310.39H709.85V1320.7zM709.55,1320.7V1310.39H710.96V1320.7zM710.66,1320.7V1310.39H712.08V1320.7zM711.78,1320.7V1310.39H713.19V1320.7zM712.89,1320.7V1315.44H714.31V1320.7zM714.01,1320.7V1310.39H715.42V1320.7zM715.12,1320.7V1310.39H716.54V1320.7zM716.24,1320.7V1310.39H717.65V1320.7zM717.35,1320.7V1310.39H718.77V1320.7zM718.47,1320.7V1310.39H719.88V1320.7zM719.58,1320.7V1310.39H721.00V1320.7zM720.70,1320.7V1310.39H722.12V1320.7zM721.82,1320.7V1310.39H723.23V1320.7zM722.93,1320.7V1310.39H724.35V1320.7zM724.05,1320.7V1305.34H725.46V1320.7zM725.16,1320.7V1305.34H726.58V1320.7zM726.28,1320.7V1305.34H727.69V1320.7zM727.39,1320.7V1305.34H728.81V1320.7zM728.51,1320.7V1305.34H729.92V1320.7zM729.62,1320.7V1305.34H731.04V1320.7zM730.74,1320.7V1305.34H732.15V1320.7zM731.85,1320.7V1305.34H733.27V1320.7zM732.97,1320.7V1305.34H734.38V1320.7zM734.08,1320.7V1305.34H735.50V1320.7zM735.20,1320.7V1310.39H736.61V1320.7zM736.31,1320.7V1310.39H737.73V1320.7zM737.43,1320.7V1310.39H738.84V1320.7zM738.54,1320.7V1310.39H739.96V1320.7zM739.66,1320.7V1310.39H741.08V1320.7zM740.78,1320.7V1315.44H742.19V1320.7zM741.89,1320.7V1310.39H743.31V1320.7zM743.01,1320.7V1315.44H744.42V1320.7zM744.12,1320.7V1315.44H745.54V1320.7zM745.24,1320.7V1310.39H746.65V1320.7zM746.35,1320.7V1310.39H747.77V1320.7zM747.47,1320.7V1305.34H748.88V1320.7zM748.58,1320.7V1315.44H750.00V1320.7zM749.70,1320.7V1310.39H751.11V1320.7zM750.81,1320.7V1310.39H752.23V1320.7zM751.93,1320.7V1310.39H753.34V1320.7zM753.04,1320.7V1315.44H754.46V1320.7zM754.16,1320.7V1310.39H755.57V1320.7zM755.27,1320.7V1310.39H756.69V1320.7zM756.39,1320.7V1310.39H757.80V1320.7zM757.50,1320.7V1305.34H758.92V1320.7zM758.62,1320.7V1305.34H760.03V1320.7zM759.73,1320.7V1305.34H761.15V1320.7zM760.85,1320.7V1305.34H762.27V1320.7zM761.97,1320.7V1305.34H763.38V1320.7zM763.08,1320.7V1305.34H764.50V1320.7zM764.20,1320.7V1305.34H765.61V1320.7zM765.31,1320.7V1305.34H766.73V1320.7zM766.43,1320.7V1305.34H767.84V1320.7zM767.54,1320.7V1305.34H768.96V1320.7zM768.66,1320.7V1310.39H770.07V1320.7zM769.77,1320.7V1310.39H771.19V1320.7zM770.89,1320.7V1310.39H772.30V1320.7zM772.00,1320.7V1310.39H773.42V1320.7zM773.12,1320.7V1310.39H774.53V1320.7zM774.23,1320.7V1310.39H775.65V1320.7zM775.35,1320.7V1310.39H776.76V1320.7zM776.46,1320.7V1310.39H777.88V1320.7zM777.58,1320.7V1315.44H778.99V1320.7zM778.69,1320.7V1310.39H780.11V1320.7zM779.81,1320.7V1310.39H781.23V1320.7zM780.93,1320.7V1315.44H782.34V1320.7zM782.04,1320.7V1310.39H783.46V1320.7zM783.16,1320.7V1315.44H784.57V1320.7zM784.27,1320.7V1310.39H785.69V1320.7zM785.39,1320.7V1315.44H786.80V1320.7zM786.50,1320.7V1310.39H787.92V1320.7zM787.62,1320.7V1310.39H789.03V1320.7zM788.73,1320.7V1310.39H790.15V1320.7zM789.85,1320.7V1315.44H791.26V1320.7zM790.96,1320.7V1310.39H792.38V1320.7zM792.08,1320.7V1310.39H793.49V1320.7zM793.19,1320.7V1310.39H794.61V1320.7zM794.31,1320.7V1310.39H795.72V1320.7zM795.42,1320.7V1310.39H796.84V1320.7zM796.54,1320.7V1310.39H797.95V1320.7zM797.65,1320.7V1305.34H799.07V1320.7zM798.77,1320.7V1310.39H800.18V1320.7zM799.88,1320.7V1315.44H801.30V1320.7zM801.00,1320.7V1310.39H802.42V1320.7zM802.12,1320.7V1310.39H803.53V1320.7zM803.23,1320.7V1310.39H804.65V1320.7zM804.35,1320.7V1310.39H805.76V1320.7zM805.46,1320.7V1310.39H806.88V1320.7zM806.58,1320.7V1315.44H807.99V1320.7zM807.69,1320.7V1315.44H809.11V1320.7zM808.81,1320.7V1305.34H810.22V1320.7zM809.92,1320.7V1310.39H811.34V1320.7zM811.04,1320.7V1315.44H812.45V1320.7zM812.15,1320.7V1315.44H813.57V1320.7zM813.27,1320.7V1310.39H814.68V1320.7zM814.38,1320.7V1310.39H815.80V1320.7zM815.50,1320.7V1310.39H816.91V1320.7zM816.61,1320.7V1310.39H818.03V1320.7zM817.73,1320.7V1310.39H819.14V1320.7zM818.84,1320.7V1310.39H820.26V1320.7zM819.96,1320.7V1310.39H821.38V1320.7zM821.08,1320.7V1310.39H822.49V1320.7zM822.19,1320.7V1310.39H823.61V1320.7zM823.31,1320.7V1315.44H824.72V1320.7zM824.42,1320.7V1310.39H825.84V1320.7zM825.54,1320.7V1310.39H826.95V1320.7zM826.65,1320.7V1310.39H828.07V1320.7zM827.77,1320.7V1310.39H829.18V1320.7zM828.88,1320.7V1310.39H830.30V1320.7zM830.00,1320.7V1315.44H831.41V1320.7zM831.11,1320.7V1310.39H832.53V1320.7zM832.23,1320.7V1310.39H833.64V1320.7zM833.34,1320.7V1310.39H834.76V1320.7zM834.46,1320.7V1310.39H835.87V1320.7zM835.57,1320.7V1310.39H836.99V1320.7zM836.69,1320.7V1310.39H838.10V1320.7zM837.80,1320.7V1310.39H839.22V1320.7zM838.92,1320.7V1310.39H840.33V1320.7zM840.03,1320.7V1315.44H841.45V1320.7zM841.15,1320.7V1310.39H842.57V1320.7zM842.27,1320.7V1310.39H843.68V1320.7zM843.38,1320.7V1315.44H844.80V1320.7zM844.50,1320.7V1315.44H845.91V1320.7zM845.61,1320.7V1310.39H847.03V1320.7zM846.73,1320.7V1310.39H848.14V1320.7zM847.84,1320.7V1310.39H849.26V1320.7zM848.96,1320.7V1310.39H850.37V1320.7zM850.07,1320.7V1310.39H851.49V1320.7zM851.19,1320.7V1310.39H852.60V1320.7zM852.30,1320.7V1310.39H853.72V1320.7zM853.42,1320.7V1310.39H854.83V1320.7zM854.53,1320.7V1310.39H855.95V1320.7zM855.65,1320.7V1315.44H857.06V1320.7zM856.76,1320.7V1310.39H858.18V1320.7zM857.88,1320.7V1310.39H859.29V1320.7zM858.99,1320.7V1310.39H860.41V1320.7zM860.11,1320.7V1310.39H861.53V1320.7zM861.23,1320.7V1310.39H862.64V1320.7zM862.34,1320.7V1310.39H863.76V1320.7zM863.46,1320.7V1310.39H864.87V1320.7zM864.57,1320.7V1310.39H865.99V1320.7zM865.69,1320.7V1315.44H867.10V1320.7zM866.80,1320.7V1310.39H868.22V1320.7zM867.92,1320.7V1310.39H869.33V1320.7zM869.03,1320.7V1310.39H870.45V1320.7zM870.15,1320.7V1315.44H871.56V1320.7zM871.26,1320.7V1310.39H872.68V1320.7zM872.38,1320.7V1310.39H873.79V1320.7zM873.49,1320.7V1310.39H874.91V1320.7zM874.61,1320.7V1310.39H876.02V1320.7zM875.72,1320.7V1310.39H877.14V1320.7zM876.84,1320.7V1315.44H878.25V1320.7zM877.95,1320.7V1315.44H879.37V1320.7zM879.07,1320.7V1315.44H880.48V1320.7zM880.18,1320.7V1310.39H881.60V1320.7zM881.30,1320.7V1310.39H882.72V1320.7zM882.42,1320.7V1310.39H883.83V1320.7zM883.53,1320.7V1315.44H884.95V1320.7zM884.65,1320.7V1310.39H886.06V1320.7zM885.76,1320.7V1310.39H887.18V1320.7zM886.88,1320.7V1310.39H888.29V1320.7zM887.99,1320.7V1310.39H889.41V1320.7zM889.11,1320.7V1315.44H890.52V1320.7zM890.22,1320.7V1305.34H891.64V1320.7zM891.34,1320.7V1315.44H892.75V1320.7zM892.45,1320.7V1315.44H893.87V1320.7zM893.57,1320.7V1310.39H894.98V1320.7zM894.68,1320.7V1310.39H896.10V1320.7zM895.80,1320.7V1310.39H897.21V1320.7zM896.91,1320.7V1310.39H898.33V1320.7zM898.03,1320.7V1310.39H899.44V1320.7zM899.14,1320.7V1315.44H900.56V1320.7zM900.26,1320.7V1310.39H901.68V1320.7zM901.38,1320.7V1310.39H902.79V1320.7zM902.49,1320.7V1310.39H903.91V1320.7zM903.61,1320.7V1310.39H905.02V1320.7zM904.72,1320.7V1310.39H906.14V1320.7zM905.84,1320.7V1310.39H907.25V1320.7zM906.95,1320.7V1310.39H908.37V1320.7zM908.07,1320.7V1310.39H909.48V1320.7zM909.18,1320.7V1315.44H910.60V1320.7zM910.30,1320.7V1310.39H911.71V1320.7zM911.41,1320.7V1310.39H912.83V1320.7zM912.53,1320.7V1310.39H913.94V1320.7zM913.64,1320.7V1310.39H915.06V1320.7zM914.76,1320.7V1310.39H916.17V1320.7zM915.87,1320.7V1310.39H917.29V1320.7zM916.99,1320.7V1310.39H918.40V1320.7zM918.10,1320.7V1310.39H919.52V1320.7zM919.22,1320.7V1310.39H920.63V1320.7zM920.33,1320.7V1310.39H921.75V1320.7zM921.45,1320.7V1310.39H922.87V1320.7zM922.57,1320.7V1310.39H923.98V1320.7zM923.68,1320.7V1310.39H925.10V1320.7zM924.80,1320.7V1310.39H926.21V1320.7zM925.91,1320.7V1310.39H927.33V1320.7zM927.03,1320.7V1310.39H928.44V1320.7zM928.14,1320.7V1315.44H929.56V1320.7zM929.26,1320.7V1310.39H930.67V1320.7zM930.37,1320.7V1315.44H931.79V1320.7zM931.49,1320.7V1310.39H932.90V1320.7zM932.60,1320.7V1310.39H934.02V1320.7zM933.72,1320.7V1310.39H935.13V1320.7zM934.83,1320.7V1315.44H936.25V1320.7zM935.95,1320.7V1310.39H937.36V1320.7zM937.06,1320.7V1310.39H938.48V1320.7zM938.18,1320.7V1310.39H939.59V1320.7zM939.29,1320.7V1310.39H940.71V1320.7zM940.41,1320.7V1310.39H941.83V1320.7zM941.53,1320.7V1305.34H942.94V1320.7zM942.64,1320.7V1305.34H944.06V1320.7zM943.76,1320.7V1305.34H945.17V1320.7zM944.87,1320.7V1305.34H946.29V1320.7zM945.99,1320.7V1305.34H947.40V1320.7zM947.10,1320.7V1305.34H948.52V1320.7zM948.22,1320.7V1305.34H949.63V1320.7zM949.33,1320.7V1305.34H950.75V1320.7zM950.45,1320.7V1305.34H951.86V1320.7zM951.56,1320.7V1305.34H952.98V1320.7zM952.68,1320.7V1310.39H954.09V1320.7zM953.79,1320.7V1310.39H955.21V1320.7zM954.91,1320.7V1310.39H956.32V1320.7zM956.02,1320.7V1310.39H957.44V1320.7zM957.14,1320.7V1315.44H958.55V1320.7zM958.25,1320.7V1310.39H959.67V1320.7zM959.37,1320.7V1305.34H960.78V1320.7zM960.48,1320.7V1310.39H961.90V1320.7zM961.60,1320.7V1310.39H963.02V1320.7zM962.72,1320.7V1310.39H964.13V1320.7zM963.83,1320.7V1310.39H965.25V1320.7zM964.95,1320.7V1315.44H966.36V1320.7zM966.06,1320.7V1310.39H967.48V1320.7zM967.18,1320.7V1310.39H968.59V1320.7zM968.29,1320.7V1310.39H969.71V1320.7zM969.41,1320.7V1310.39H970.82V1320.7zM970.52,1320.7V1310.39H971.94V1320.7zM971.64,1320.7V1315.44H973.05V1320.7zM972.75,1320.7V1310.39H974.17V1320.7zM973.87,1320.7V1310.39H975.28V1320.7zM974.98,1320.7V1310.39H976.40V1320.7zM976.10,1320.7V1315.44H977.51V1320.7zM977.21,1320.7V1310.39H978.63V1320.7zM978.33,1320.7V1310.39H979.74V1320.7zM979.44,1320.7V1310.39H980.86V1320.7zM980.56,1320.7V1310.39H981.98V1320.7zM981.68,1320.7V1315.44H983.09V1320.7zM982.79,1320.7V1315.44H984.21V1320.7zM983.91,1320.7V1310.39H985.32V1320.7zM985.02,1320.7V1315.44H986.44V1320.7zM986.14,1320.7V1315.44H987.55V1320.7zM987.25,1320.7V1310.39H988.67V1320.7zM988.37,1320.7V1310.39H989.78V1320.7zM989.48,1320.7V1315.44H990.90V1320.7zM990.60,1320.7V1310.39H992.01V1320.7zM991.71,1320.7V1310.39H993.13V1320.7zM992.83,1320.7V1310.39H994.24V1320.7zM993.94,1320.7V1310.39H995.36V1320.7zM995.06,1320.7V1310.39H996.47V1320.7zM996.17,1320.7V1310.39H997.59V1320.7zM997.29,1320.7V1310.39H998.70V1320.7zM998.40,1320.7V1310.39H999.82V1320.7zM999.52,1320.7V1310.39H1000.93V1320.7zM1000.63,1320.7V1310.39H1002.05V1320.7zM1001.75,1320.7V1315.44H1003.17V1320.7zM1002.87,1320.7V1310.39H1004.28V1320.7zM1003.98,1320.7V1315.44H1005.40V1320.7zM1005.10,1320.7V1310.39H1006.51V1320.7zM1006.21,1320.7V1310.39H1007.63V1320.7zM1007.33,1320.7V1305.34H1008.74V1320.7zM1008.44,1320.7V1305.34H1009.86V1320.7zM1009.56,1320.7V1310.39H1010.97V1320.7zM1010.67,1320.7V1310.39H1012.09V1320.7zM1011.79,1320.7V1310.39H1013.20V1320.7zM1012.90,1320.7V1310.39H1014.32V1320.7zM1014.02,1320.7V1315.44H1015.43V1320.7zM1015.13,1320.7V1310.39H1016.55V1320.7zM1016.25,1320.7V1310.39H1017.66V1320.7zM1017.36,1320.7V1315.44H1018.78V1320.7zM1018.48,1320.7V1310.39H1019.89V1320.7zM1019.59,1320.7V1310.39H1021.01V1320.7zM1020.71,1320.7V1305.34H1022.13V1320.7zM1021.83,1320.7V1310.39H1023.24V1320.7zM1022.94,1320.7V1310.39H1024.36V1320.7zM1024.06,1320.7V1310.39H1025.47V1320.7zM1025.17,1320.7V1310.39H1026.59V1320.7zM1026.29,1320.7V1315.44H1027.70V1320.7zM1027.40,1320.7V1310.39H1028.82V1320.7zM1028.52,1320.7V1310.39H1029.93V1320.7zM1029.63,1320.7V1315.44H1031.05V1320.7zM1030.75,1320.7V1310.39H1032.16V1320.7zM1031.86,1320.7V1310.39H1033.28V1320.7zM1032.98,1320.7V1315.44H1034.39V1320.7zM1034.09,1320.7V1310.39H1035.51V1320.7zM1035.21,1320.7V1310.39H1036.62V1320.7zM1036.32,1320.7V1310.39H1037.74V1320.7zM1037.44,1320.7V1310.39H1038.85V1320.7zM1038.55,1320.7V1310.39H1039.97V1320.7zM1039.67,1320.7V1310.39H1041.08V1320.7zM1040.78,1320.7V1310.39H1042.20V1320.7zM1041.90,1320.7V1315.44H1043.32V1320.7zM1043.02,1320.7V1310.39H1044.43V1320.7zM1044.13,1320.7V1315.44H1045.55V1320.7zM1045.25,1320.7V1310.39H1046.66V1320.7zM1046.36,1320.7V1310.39H1047.78V1320.7zM1047.48,1320.7V1310.39H1048.89V1320.7zM1048.59,1320.7V1315.44H1050.01V1320.7zM1049.71,1320.7V1315.44H1051.12V1320.7zM1050.82,1320.7V1310.39H1052.24V1320.7zM1051.94,1320.7V1310.39H1053.35V1320.7zM1053.05,1320.7V1310.39H1054.47V1320.7zM1054.17,1320.7V1310.39H1055.58V1320.7zM1055.28,1320.7V1315.44H1056.70V1320.7zM1056.40,1320.7V1310.39H1057.81V1320.7zM1057.51,1320.7V1305.34H1058.93V1320.7zM1058.63,1320.7V1310.39H1060.04V1320.7zM1059.74,1320.7V1305.34H1061.16V1320.7zM1060.86,1320.7V1310.39H1062.28V1320.7zM1061.98,1320.7V1310.39H1063.39V1320.7zM1063.09,1320.7V1310.39H1064.51V1320.7zM1064.21,1320.7V1310.39H1065.62V1320.7zM1065.32,1320.7V1310.39H1066.74V1320.7zM1066.44,1320.7V1310.39H1067.85V1320.7zM1067.55,1320.7V1310.39H1068.97V1320.7zM1068.67,1320.7V1310.39H1070.08V1320.7zM1069.78,1320.7V1310.39H1071.20V1320.7zM1070.90,1320.7V1310.39H1072.31V1320.7zM1072.01,1320.7V1310.39H1073.43V1320.7zM1073.13,1320.7V1310.39H1074.54V1320.7zM1074.24,1320.7V1310.39H1075.66V1320.7zM1075.36,1320.7V1310.39H1076.77V1320.7zM1076.47,1320.7V1315.44H1077.89V1320.7zM1077.59,1320.7V1315.44H1079.00V1320.7zM1078.70,1320.7V1315.44H1080.12V1320.7zM1079.82,1320.7V1310.39H1081.23V1320.7zM1080.93,1320.7V1310.39H1082.35V1320.7zM1082.05,1320.7V1310.39H1083.47V1320.7zM1083.17,1320.7V1310.39H1084.58V1320.7zM1084.28,1320.7V1310.39H1085.70V1320.7zM1085.40,1320.7V1310.39H1086.81V1320.7zM1086.51,1320.7V1310.39H1087.93V1320.7zM1087.63,1320.7V1310.39H1089.04V1320.7zM1088.74,1320.7V1310.39H1090.16V1320.7zM1089.86,1320.7V1310.39H1091.27V1320.7zM1090.97,1320.7V1310.39H1092.39V1320.7zM1092.09,1320.7V1315.44H1093.50V1320.7zM1093.20,1320.7V1310.39H1094.62V1320.7zM1094.32,1320.7V1310.39H1095.73V1320.7zM1095.43,1320.7V1315.44H1096.85V1320.7zM1096.55,1320.7V1310.39H1097.96V1320.7zM1097.66,1320.7V1310.39H1099.08V1320.7zM1098.78,1320.7V1310.39H1100.19V1320.7zM1099.89,1320.7V1310.39H1101.31V1320.7zM1101.01,1320.7V1310.39H1102.43V1320.7zM1102.13,1320.7V1310.39H1103.54V1320.7zM1103.24,1320.7V1310.39H1104.66V1320.7zM1104.36,1320.7V1310.39H1105.77V1320.7zM1105.47,1320.7V1315.44H1106.89V1320.7zM1106.59,1320.7V1310.39H1108.00V1320.7zM1107.70,1320.7V1310.39H1109.12V1320.7zM1108.82,1320.7V1310.39H1110.23V1320.7zM1109.93,1320.7V1315.44H1111.35V1320.7zM1111.05,1320.7V1310.39H1112.46V1320.7zM1112.16,1320.7V1310.39H1113.58V1320.7zM1113.28,1320.7V1305.34H1114.69V1320.7zM1114.39,1320.7V1310.39H1115.81V1320.7zM1115.51,1320.7V1315.44H1116.92V1320.7zM1116.62,1320.7V1310.39H1118.04V1320.7zM1117.74,1320.7V1310.39H1119.15V1320.7zM1118.85,1320.7V1305.34H1120.27V1320.7zM1119.97,1320.7V1315.44H1121.38V1320.7zM1121.08,1320.7V1315.44H1122.50V1320.7zM1122.20,1320.7V1310.39H1123.62V1320.7zM1123.32,1320.7V1310.39H1124.73V1320.7zM1124.43,1320.7V1310.39H1125.85V1320.7zM1125.55,1320.7V1310.39H1126.96V1320.7zM1126.66,1320.7V1315.44H1128.08V1320.7zM1127.78,1320.7V1310.39H1129.19V1320.7zM1128.89,1320.7V1315.44H1130.31V1320.7zM1130.01,1320.7V1310.39H1131.42V1320.7zM1131.12,1320.7V1315.44H1132.54V1320.7zM1132.24,1320.7V1310.39H1133.65V1320.7zM1133.35,1320.7V1310.39H1134.77V1320.7zM1134.47,1320.7V1310.39H1135.88V1320.7zM1135.58,1320.7V1315.44H1137.00V1320.7zM1136.70,1320.7V1310.39H1138.11V1320.7zM1137.81,1320.7V1310.39H1139.23V1320.7zM1138.93,1320.7V1310.39H1140.34V1320.7zM1140.04,1320.7V1310.39H1141.46V1320.7zM1141.16,1320.7V1310.39H1142.58V1320.7zM1142.28,1320.7V1310.39H1143.69V1320.7zM1143.39,1320.7V1310.39H1144.81V1320.7zM1144.51,1320.7V1310.39H1145.92V1320.7zM1145.62,1320.7V1310.39H1147.04V1320.7zM1146.74,1320.7V1310.39H1148.15V1320.7zM1147.85,1320.7V1310.39H1149.27V1320.7zM1148.97,1320.7V1310.39H1150.38V1320.7zM1150.08,1320.7V1310.39H1151.50V1320.7zM1151.20,1320.7V1310.39H1152.61V1320.7zM1152.31,1320.7V1310.39H1153.73V1320.7zM1153.43,1320.7V1310.39H1154.84V1320.7zM1154.54,1320.7V1305.34H1155.96V1320.7zM1155.66,1320.7V1305.34H1157.07V1320.7zM1156.77,1320.7V1305.34H1158.19V1320.7zM1157.89,1320.7V1305.34H1159.30V1320.7zM1159.00,1320.7V1305.34H1160.42V1320.7zM1160.12,1320.7V1305.34H1161.53V1320.7zM1161.23,1320.7V1305.34H1162.65V1320.7zM1162.35,1320.7V1305.34H1163.77V1320.7zM1163.47,1320.7V1310.39H1164.88V1320.7zM1164.58,1320.7V1310.39H1166.00V1320.7zM1165.70,1320.7V1310.39H1167.11V1320.7zM1166.81,1320.7V1310.39H1168.23V1320.7zM1167.93,1320.7V1310.39H1169.34V1320.7zM1169.04,1320.7V1310.39H1170.46V1320.7zM1170.16,1320.7V1315.44H1171.57V1320.7zM1171.27,1320.7V1310.39H1172.69V1320.7zM1172.39,1320.7V1310.39H1173.80V1320.7zM1173.50,1320.7V1310.39H1174.92V1320.7zM1174.62,1320.7V1310.39H1176.03V1320.7zM1175.73,1320.7V1315.44H1177.15V1320.7zM1176.85,1320.7V1315.44H1178.26V1320.7zM1177.96,1320.7V1310.39H1179.38V1320.7zM1179.08,1320.7V1310.39H1180.49V1320.7zM1180.19,1320.7V1310.39H1181.61V1320.7zM1181.31,1320.7V1310.39H1182.73V1320.7zM1182.43,1320.7V1310.39H1183.84V1320.7zM1183.54,1320.7V1315.44H1184.96V1320.7zM1184.66,1320.7V1310.39H1186.07V1320.7zM1185.77,1320.7V1305.34H1187.19V1320.7zM1186.89,1320.7V1310.39H1188.30V1320.7zM1188.00,1320.7V1315.44H1189.42V1320.7zM1189.12,1320.7V1310.39H1190.53V1320.7zM1190.23,1320.7V1310.39H1191.65V1320.7zM1191.35,1320.7V1310.39H1192.76V1320.7zM1192.46,1320.7V1310.39H1193.88V1320.7zM1193.58,1320.7V1310.39H1194.99V1320.7zM1194.69,1320.7V1315.44H1196.11V1320.7zM1195.81,1320.7V1310.39H1197.22V1320.7zM1196.92,1320.7V1310.39H1198.34V1320.7zM1198.04,1320.7V1310.39H1199.45V1320.7zM1199.15,1320.7V1310.39H1200.57V1320.7zM1200.27,1320.7V1310.39H1201.68V1320.7zM1201.38,1320.7V1310.39H1202.80V1320.7zM1202.50,1320.7V1310.39H1203.92V1320.7zM1203.62,1320.7V1315.44H1205.03V1320.7zM1204.73,1320.7V1310.39H1206.15V1320.7zM1205.85,1320.7V1310.39H1207.26V1320.7zM1206.96,1320.7V1305.34H1208.38V1320.7zM1208.08,1320.7V1315.44H1209.49V1320.7zM1209.19,1320.7V1310.39H1210.61V1320.7zM1210.31,1320.7V1310.39H1211.72V1320.7zM1358.64,1320.7V1275.01H1360.05V1320.7zM1359.75,1320.7V1280.06H1361.17V1320.7zM1360.87,1320.7V1280.06H1362.28V1320.7zM1361.98,1320.7V1280.06H1363.40V1320.7zM1363.10,1320.7V1285.12H1364.52V1320.7zM1364.22,1320.7V1285.12H1365.63V1320.7zM1365.33,1320.7V1285.12H1366.75V1320.7zM1366.45,1320.7V1285.12H1367.86V1320.7zM1367.56,1320.7V1285.12H1368.98V1320.7zM1368.68,1320.7V1285.12H1370.09V1320.7zM1369.79,1320.7V1285.12H1371.21V1320.7zM1370.91,1320.7V1285.12H1372.32V1320.7zM1372.02,1320.7V1285.12H1373.44V1320.7zM1373.14,1320.7V1285.12H1374.55V1320.7zM1374.25,1320.7V1285.12H1375.67V1320.7zM1375.37,1320.7V1300.28H1376.78V1320.7zM1376.48,1320.7V1310.39H1377.90V1320.7zM1377.60,1320.7V1310.39H1379.01V1320.7zM1378.71,1320.7V1310.39H1380.13V1320.7zM1379.83,1320.7V1315.44H1381.24V1320.7zM1380.94,1320.7V1310.39H1382.36V1320.7zM1382.06,1320.7V1310.39H1383.48V1320.7zM1383.18,1320.7V1310.39H1384.59V1320.7zM1384.29,1320.7V1310.39H1385.71V1320.7zM1385.41,1320.7V1315.44H1386.82V1320.7zM1386.52,1320.7V1310.39H1387.94V1320.7zM1387.64,1320.7V1310.39H1389.05V1320.7zM1388.75,1320.7V1310.39H1390.17V1320.7zM1389.87,1320.7V1310.39H1391.28V1320.7zM1390.98,1320.7V1310.39H1392.40V1320.7zM1392.10,1320.7V1310.39H1393.51V1320.7zM1393.21,1320.7V1310.39H1394.63V1320.7zM1394.33,1320.7V1310.39H1395.74V1320.7zM1395.44,1320.7V1310.39H1396.86V1320.7zM1396.56,1320.7V1315.44H1397.97V1320.7zM1397.67,1320.7V1310.39H1399.09V1320.7zM1398.79,1320.7V1310.39H1400.20V1320.7zM1399.90,1320.7V1315.44H1401.32V1320.7zM1401.02,1320.7V1310.39H1402.43V1320.7zM1402.13,1320.7V1310.39H1403.55V1320.7zM1403.25,1320.7V1310.39H1404.67V1320.7zM1404.37,1320.7V1310.39H1405.78V1320.7zM1405.48,1320.7V1310.39H1406.90V1320.7zM1406.60,1320.7V1310.39H1408.01V1320.7zM1407.71,1320.7V1310.39H1409.13V1320.7zM1408.83,1320.7V1310.39H1410.24V1320.7zM1409.94,1320.7V1315.44H1411.36V1320.7zM1411.06,1320.7V1310.39H1412.47V1320.7zM1412.17,1320.7V1310.39H1413.59V1320.7zM1413.29,1320.7V1310.39H1414.70V1320.7zM1414.40,1320.7V1310.39H1415.82V1320.7zM1415.52,1320.7V1310.39H1416.93V1320.7zM1416.63,1320.7V1305.34H1418.05V1320.7zM1417.75,1320.7V1310.39H1419.16V1320.7zM1418.86,1320.7V1310.39H1420.28V1320.7zM1419.98,1320.7V1310.39H1421.39V1320.7zM1421.09,1320.7V1310.39H1422.51V1320.7zM1422.21,1320.7V1315.44H1423.63V1320.7zM1423.33,1320.7V1310.39H1424.74V1320.7zM1424.44,1320.7V1310.39H1425.86V1320.7zM1425.56,1320.7V1310.39H1426.97V1320.7zM1426.67,1320.7V1315.44H1428.09V1320.7zM1427.79,1320.7V1310.39H1429.20V1320.7zM1428.90,1320.7V1310.39H1430.32V1320.7zM1430.02,1320.7V1310.39H1431.43V1320.7zM1431.13,1320.7V1310.39H1432.55V1320.7zM1432.25,1320.7V1310.39H1433.66V1320.7zM1433.36,1320.7V1310.39H1434.78V1320.7zM1434.48,1320.7V1310.39H1435.89V1320.7zM1435.59,1320.7V1310.39H1437.01V1320.7zM1436.71,1320.7V1310.39H1438.12V1320.7zM1437.82,1320.7V1310.39H1439.24V1320.7zM1438.94,1320.7V1310.39H1440.35V1320.7zM1440.05,1320.7V1315.44H1441.47V1320.7zM1441.17,1320.7V1310.39H1442.58V1320.7zM1442.28,1320.7V1310.39H1443.70V1320.7zM1443.40,1320.7V1310.39H1444.82V1320.7zM1444.52,1320.7V1310.39H1445.93V1320.7zM1445.63,1320.7V1310.39H1447.05V1320.7zM1446.75,1320.7V1310.39H1448.16V1320.7zM1447.86,1320.7V1310.39H1449.28V1320.7zM1448.98,1320.7V1310.39H1450.39V1320.7zM1450.09,1320.7V1315.44H1451.51V1320.7zM1451.21,1320.7V1310.39H1452.62V1320.7zM1452.32,1320.7V1315.44H1453.74V1320.7zM1453.44,1320.7V1310.39H1454.85V1320.7zM1454.55,1320.7V1310.39H1455.97V1320.7zM1455.67,1320.7V1310.39H1457.08V1320.7zM1456.78,1320.7V1310.39H1458.20V1320.7zM1457.90,1320.7V1315.44H1459.31V1320.7zM1459.01,1320.7V1310.39H1460.43V1320.7zM1460.13,1320.7V1310.39H1461.54V1320.7zM1461.24,1320.7V1315.44H1462.66V1320.7zM1462.36,1320.7V1310.39H1463.78V1320.7zM1463.48,1320.7V1310.39H1464.89V1320.7zM1464.59,1320.7V1315.44H1466.01V1320.7zM1465.71,1320.7V1310.39H1467.12V1320.7zM1466.82,1320.7V1310.39H1468.24V1320.7zM1467.94,1320.7V1310.39H1469.35V1320.7zM1469.05,1320.7V1315.44H1470.47V1320.7zM1470.17,1320.7V1310.39H1471.58V1320.7zM1471.28,1320.7V1315.44H1472.70V1320.7zM1472.40,1320.7V1310.39H1473.81V1320.7zM1473.51,1320.7V1315.44H1474.93V1320.7zM1474.63,1320.7V1310.39H1476.04V1320.7zM1475.74,1320.7V1310.39H1477.16V1320.7zM1476.86,1320.7V1310.39H1478.27V1320.7zM1477.97,1320.7V1310.39H1479.39V1320.7zM1479.09,1320.7V1310.39H1480.50V1320.7zM1480.20,1320.7V1310.39H1481.62V1320.7zM1481.32,1320.7V1310.39H1482.73V1320.7zM1482.43,1320.7V1315.44H1483.85V1320.7zM1483.55,1320.7V1310.39H1484.97V1320.7zM1484.67,1320.7V1310.39H1486.08V1320.7zM1485.78,1320.7V1310.39H1487.20V1320.7zM1486.90,1320.7V1315.44H1488.31V1320.7zM1488.01,1320.7V1310.39H1489.43V1320.7zM1489.13,1320.7V1310.39H1490.54V1320.7zM1490.24,1320.7V1310.39H1491.66V1320.7zM1491.36,1320.7V1310.39H1492.77V1320.7zM1492.47,1320.7V1310.39H1493.89V1320.7zM1493.59,1320.7V1310.39H1495.00V1320.7zM1494.70,1320.7V1310.39H1496.12V1320.7zM1495.82,1320.7V1310.39H1497.23V1320.7zM1496.93,1320.7V1310.39H1498.35V1320.7zM1498.05,1320.7V1310.39H1499.46V1320.7zM1499.16,1320.7V1310.39H1500.58V1320.7zM1500.28,1320.7V1305.34H1501.69V1320.7zM1501.39,1320.7V1305.34H1502.81V1320.7zM1502.51,1320.7V1315.44H1503.93V1320.7zM1503.63,1320.7V1310.39H1505.04V1320.7zM1504.74,1320.7V1315.44H1506.16V1320.7zM1505.86,1320.7V1315.44H1507.27V1320.7zM1506.97,1320.7V1315.44H1508.39V1320.7zM1508.09,1320.7V1310.39H1509.50V1320.7zM1509.20,1320.7V1310.39H1510.62V1320.7zM1510.32,1320.7V1310.39H1511.73V1320.7zM1511.43,1320.7V1310.39H1512.85V1320.7zM1512.55,1320.7V1315.44H1513.96V1320.7zM1513.66,1320.7V1305.34H1515.08V1320.7zM1514.78,1320.7V1310.39H1516.19V1320.7zM1515.89,1320.7V1305.34H1517.31V1320.7zM1517.01,1320.7V1310.39H1518.42V1320.7zM1518.12,1320.7V1310.39H1519.54V1320.7zM1519.24,1320.7V1310.39H1520.65V1320.7zM1520.35,1320.7V1310.39H1521.77V1320.7zM1521.47,1320.7V1310.39H1522.88V1320.7zM1522.58,1320.7V1310.39H1524.00V1320.7zM1523.70,1320.7V1310.39H1525.12V1320.7zM1524.82,1320.7V1310.39H1526.23V1320.7zM1525.93,1320.7V1310.39H1527.35V1320.7zM1527.05,1320.7V1310.39H1528.46V1320.7zM1528.16,1320.7V1310.39H1529.58V1320.7zM1529.28,1320.7V1310.39H1530.69V1320.7zM1530.39,1320.7V1310.39H1531.81V1320.7zM1531.51,1320.7V1310.39H1532.92V1320.7zM1679.84,1320.7V1234.57H1681.25V1320.7zM1680.95,1320.7V1224.45H1682.37V1320.7zM1682.07,1320.7V1224.45H1683.48V1320.7zM1683.18,1320.7V1204.24H1684.60V1320.7zM1684.30,1320.7V1249.73H1685.72V1320.7zM1685.42,1320.7V1249.73H1686.83V1320.7zM1686.53,1320.7V1249.73H1687.95V1320.7zM1687.65,1320.7V1249.73H1689.06V1320.7zM1688.76,1320.7V1249.73H1690.18V1320.7zM1689.88,1320.7V1254.79H1691.29V1320.7zM1690.99,1320.7V1254.79H1692.41V1320.7zM1692.11,1320.7V1254.79H1693.52V1320.7zM1693.22,1320.7V1254.79H1694.64V1320.7zM1694.34,1320.7V1254.79H1695.75V1320.7zM1695.45,1320.7V1254.79H1696.87V1320.7zM1696.57,1320.7V1254.79H1697.98V1320.7zM1697.68,1320.7V1249.73H1699.10V1320.7zM1698.80,1320.7V1254.79H1700.21V1320.7zM1699.91,1320.7V1254.79H1701.33V1320.7zM1701.03,1320.7V1310.39H1702.44V1320.7zM1702.14,1320.7V1310.39H1703.56V1320.7zM1703.26,1320.7V1315.44H1704.68V1320.7zM1704.38,1320.7V1315.44H1705.79V1320.7zM1705.49,1320.7V1315.44H1706.91V1320.7zM1706.61,1320.7V1315.44H1708.02V1320.7zM1707.72,1320.7V1315.44H1709.14V1320.7zM1708.84,1320.7V1310.39H1710.25V1320.7zM1709.95,1320.7V1315.44H1711.37V1320.7zM1711.07,1320.7V1315.44H1712.48V1320.7zM1712.18,1320.7V1315.44H1713.60V1320.7zM1713.30,1320.7V1315.44H1714.71V1320.7zM1714.41,1320.7V1310.39H1715.83V1320.7zM1715.53,1320.7V1315.44H1716.94V1320.7zM1716.64,1320.7V1315.44H1718.06V1320.7zM1717.76,1320.7V1310.39H1719.17V1320.7zM1718.87,1320.7V1315.44H1720.29V1320.7zM1719.99,1320.7V1315.44H1721.40V1320.7zM1721.10,1320.7V1315.44H1722.52V1320.7zM1722.22,1320.7V1315.44H1723.63V1320.7zM1723.33,1320.7V1315.44H1724.75V1320.7zM1724.45,1320.7V1310.39H1725.87V1320.7zM1725.57,1320.7V1315.44H1726.98V1320.7zM1726.68,1320.7V1310.39H1728.10V1320.7zM1727.80,1320.7V1310.39H1729.21V1320.7zM1728.91,1320.7V1315.44H1730.33V1320.7zM1730.03,1320.7V1315.44H1731.44V1320.7zM1731.14,1320.7V1315.44H1732.56V1320.7zM1732.26,1320.7V1315.44H1733.67V1320.7zM1733.37,1320.7V1315.44H1734.79V1320.7zM1734.49,1320.7V1315.44H1735.90V1320.7zM1735.60,1320.7V1315.44H1737.02V1320.7zM1736.72,1320.7V1315.44H1738.13V1320.7zM1737.83,1320.7V1315.44H1739.25V1320.7zM1738.95,1320.7V1310.39H1740.36V1320.7zM1740.06,1320.7V1315.44H1741.48V1320.7zM1741.18,1320.7V1315.44H1742.59V1320.7zM1742.29,1320.7V1310.39H1743.71V1320.7zM1743.41,1320.7V1315.44H1744.83V1320.7zM1744.53,1320.7V1310.39H1745.94V1320.7zM1745.64,1320.7V1310.39H1747.06V1320.7zM1746.76,1320.7V1310.39H1748.17V1320.7zM1747.87,1320.7V1315.44H1749.29V1320.7zM1748.99,1320.7V1310.39H1750.40V1320.7zM1750.10,1320.7V1310.39H1751.52V1320.7zM1751.22,1320.7V1305.34H1752.63V1320.7zM1752.33,1320.7V1305.34H1753.75V1320.7zM1753.45,1320.7V1310.39H1754.86V1320.7zM1754.56,1320.7V1310.39H1755.98V1320.7zM1755.68,1320.7V1310.39H1757.09V1320.7zM1756.79,1320.7V1310.39H1758.21V1320.7zM1757.91,1320.7V1305.34H1759.32V1320.7zM1759.02,1320.7V1310.39H1760.44V1320.7zM1760.14,1320.7V1315.44H1761.55V1320.7zM1761.25,1320.7V1310.39H1762.67V1320.7zM1762.37,1320.7V1310.39H1763.78V1320.7zM1763.48,1320.7V1310.39H1764.90V1320.7zM1764.60,1320.7V1310.39H1766.02V1320.7zM1765.72,1320.7V1310.39H1767.13V1320.7zM1766.83,1320.7V1310.39H1768.25V1320.7zM1767.95,1320.7V1310.39H1769.36V1320.7zM1769.06,1320.7V1310.39H1770.48V1320.7zM1770.18,1320.7V1310.39H1771.59V1320.7zM1771.29,1320.7V1310.39H1772.71V1320.7zM1772.41,1320.7V1310.39H1773.82V1320.7zM1773.52,1320.7V1310.39H1774.94V1320.7zM1774.64,1320.7V1310.39H1776.05V1320.7zM1775.75,1320.7V1310.39H1777.17V1320.7zM1776.87,1320.7V1310.39H1778.28V1320.7zM1777.98,1320.7V1315.44H1779.40V1320.7zM1779.10,1320.7V1315.44H1780.51V1320.7zM1780.21,1320.7V1310.39H1781.63V1320.7zM1781.33,1320.7V1305.34H1782.74V1320.7zM1782.44,1320.7V1315.44H1783.86V1320.7zM1783.56,1320.7V1310.39H1784.98V1320.7zM1784.68,1320.7V1310.39H1786.09V1320.7zM1785.79,1320.7V1305.34H1787.21V1320.7zM1786.91,1320.7V1310.39H1788.32V1320.7zM1788.02,1320.7V1310.39H1789.44V1320.7zM1789.14,1320.7V1310.39H1790.55V1320.7zM1790.25,1320.7V1315.44H1791.67V1320.7zM1791.37,1320.7V1310.39H1792.78V1320.7zM1792.48,1320.7V1310.39H1793.90V1320.7zM1793.60,1320.7V1310.39H1795.01V1320.7zM1794.71,1320.7V1310.39H1796.13V1320.7zM1795.83,1320.7V1310.39H1797.24V1320.7zM1796.94,1320.7V1310.39H1798.36V1320.7zM1798.06,1320.7V1310.39H1799.47V1320.7zM1799.17,1320.7V1310.39H1800.59V1320.7zM1800.29,1320.7V1315.44H1801.70V1320.7zM1801.40,1320.7V1310.39H1802.82V1320.7zM1802.52,1320.7V1310.39H1803.93V1320.7zM1803.63,1320.7V1315.44H1805.05V1320.7zM1804.75,1320.7V1310.39H1806.17V1320.7zM1805.87,1320.7V1310.39H1807.28V1320.7zM1806.98,1320.7V1310.39H1808.40V1320.7zM1808.10,1320.7V1315.44H1809.51V1320.7zM1809.21,1320.7V1310.39H1810.63V1320.7zM1810.33,1320.7V1315.44H1811.74V1320.7zM1811.44,1320.7V1310.39H1812.86V1320.7zM1812.56,1320.7V1310.39H1813.97V1320.7zM1813.67,1320.7V1310.39H1815.09V1320.7zM1814.79,1320.7V1310.39H1816.20V1320.7zM1815.90,1320.7V1310.39H1817.32V1320.7zM1817.02,1320.7V1315.44H1818.43V1320.7zM1818.13,1320.7V1310.39H1819.55V1320.7zM1819.25,1320.7V1310.39H1820.66V1320.7zM1820.36,1320.7V1310.39H1821.78V1320.7zM1821.48,1320.7V1310.39H1822.89V1320.7zM1822.59,1320.7V1310.39H1824.01V1320.7zM1823.71,1320.7V1310.39H1825.13V1320.7zM1824.83,1320.7V1310.39H1826.24V1320.7zM1825.94,1320.7V1310.39H1827.36V1320.7zM1827.06,1320.7V1310.39H1828.47V1320.7zM1828.17,1320.7V1310.39H1829.59V1320.7zM1829.29,1320.7V1310.39H1830.70V1320.7zM1830.40,1320.7V1315.44H1831.82V1320.7zM1831.52,1320.7V1310.39H1832.93V1320.7zM1832.63,1320.7V1315.44H1834.05V1320.7zM1833.75,1320.7V1310.39H1835.16V1320.7zM1834.86,1320.7V1310.39H1836.28V1320.7zM1835.98,1320.7V1310.39H1837.39V1320.7zM1837.09,1320.7V1315.44H1838.51V1320.7zM1838.21,1320.7V1310.39H1839.62V1320.7zM1839.32,1320.7V1310.39H1840.74V1320.7zM1840.44,1320.7V1315.44H1841.85V1320.7zM1841.55,1320.7V1310.39H1842.97V1320.7zM1842.67,1320.7V1310.39H1844.08V1320.7zM1843.78,1320.7V1310.39H1845.20V1320.7zM1844.90,1320.7V1310.39H1846.32V1320.7zM1846.02,1320.7V1310.39H1847.43V1320.7zM1847.13,1320.7V1310.39H1848.55V1320.7zM1848.25,1320.7V1315.44H1849.66V1320.7zM1849.36,1320.7V1310.39H1850.78V1320.7zM1850.48,1320.7V1315.44H1851.89V1320.7zM1851.59,1320.7V1310.39H1853.01V1320.7zM1852.71,1320.7V1310.39H1854.12V1320.7zM2001.04,1320.7V1249.73H2002.45V1320.7zM2002.15,1320.7V1254.79H2003.57V1320.7zM2003.27,1320.7V1254.79H2004.68V1320.7zM2004.38,1320.7V1254.79H2005.80V1320.7zM2005.50,1320.7V1254.79H2006.92V1320.7zM2006.62,1320.7V1259.84H2008.03V1320.7zM2007.73,1320.7V1259.84H2009.15V1320.7zM2008.85,1320.7V1259.84H2010.26V1320.7zM2009.96,1320.7V1259.84H2011.38V1320.7zM2011.08,1320.7V1259.84H2012.49V1320.7zM2012.19,1320.7V1264.89H2013.61V1320.7zM2013.31,1320.7V1264.89H2014.72V1320.7zM2014.42,1320.7V1264.89H2015.84V1320.7zM2015.54,1320.7V1259.84H2016.95V1320.7zM2016.65,1320.7V1259.84H2018.07V1320.7zM2017.77,1320.7V1259.84H2019.18V1320.7zM2018.88,1320.7V1264.89H2020.30V1320.7zM2020.00,1320.7V1264.89H2021.41V1320.7zM2021.11,1320.7V1264.89H2022.53V1320.7zM2022.23,1320.7V1259.84H2023.64V1320.7zM2023.34,1320.7V1259.84H2024.76V1320.7zM2024.46,1320.7V1259.84H2025.88V1320.7zM2025.58,1320.7V1264.89H2026.99V1320.7zM2026.69,1320.7V1264.89H2028.11V1320.7zM2027.81,1320.7V1264.89H2029.22V1320.7zM2028.92,1320.7V1259.84H2030.34V1320.7zM2030.04,1320.7V1259.84H2031.45V1320.7zM2031.15,1320.7V1259.84H2032.57V1320.7zM2032.27,1320.7V1264.89H2033.68V1320.7zM2033.38,1320.7V1264.89H2034.80V1320.7zM2034.50,1320.7V1275.01H2035.91V1320.7zM2035.61,1320.7V1285.12H2037.03V1320.7zM2036.73,1320.7V1285.12H2038.14V1320.7zM2037.84,1320.7V1315.44H2039.26V1320.7zM2038.96,1320.7V1310.39H2040.37V1320.7zM2040.07,1320.7V1305.34H2041.49V1320.7zM2041.19,1320.7V1305.34H2042.60V1320.7zM2042.30,1320.7V1315.44H2043.72V1320.7zM2043.42,1320.7V1310.39H2044.83V1320.7zM2044.53,1320.7V1310.39H2045.95V1320.7zM2045.65,1320.7V1315.44H2047.07V1320.7zM2046.77,1320.7V1310.39H2048.18V1320.7zM2047.88,1320.7V1310.39H2049.30V1320.7zM2049.00,1320.7V1315.44H2050.41V1320.7zM2050.11,1320.7V1315.44H2051.53V1320.7zM2051.23,1320.7V1310.39H2052.64V1320.7zM2052.34,1320.7V1310.39H2053.76V1320.7zM2053.46,1320.7V1315.44H2054.87V1320.7zM2054.57,1320.7V1310.39H2055.99V1320.7zM2055.69,1320.7V1310.39H2057.10V1320.7zM2056.80,1320.7V1315.44H2058.22V1320.7zM2057.92,1320.7V1315.44H2059.33V1320.7zM2059.03,1320.7V1315.44H2060.45V1320.7zM2060.15,1320.7V1315.44H2061.56V1320.7zM2061.26,1320.7V1310.39H2062.68V1320.7zM2062.38,1320.7V1310.39H2063.79V1320.7zM2063.49,1320.7V1310.39H2064.91V1320.7zM2064.61,1320.7V1310.39H2066.03V1320.7zM2065.73,1320.7V1310.39H2067.14V1320.7zM2066.84,1320.7V1315.44H2068.26V1320.7zM2067.96,1320.7V1310.39H2069.37V1320.7zM2069.07,1320.7V1310.39H2070.49V1320.7zM2070.19,1320.7V1310.39H2071.60V1320.7zM2071.30,1320.7V1315.44H2072.72V1320.7zM2072.42,1320.7V1315.44H2073.83V1320.7zM2073.53,1320.7V1310.39H2074.95V1320.7zM2074.65,1320.7V1315.44H2076.06V1320.7zM2075.76,1320.7V1310.39H2077.18V1320.7zM2076.88,1320.7V1315.44H2078.29V1320.7zM2077.99,1320.7V1315.44H2079.41V1320.7zM2079.11,1320.7V1310.39H2080.52V1320.7zM2080.22,1320.7V1315.44H2081.64V1320.7zM2081.34,1320.7V1315.44H2082.75V1320.7zM2082.45,1320.7V1310.39H2083.87V1320.7zM2083.57,1320.7V1310.39H2084.98V1320.7zM2084.68,1320.7V1310.39H2086.10V1320.7zM2085.80,1320.7V1310.39H2087.22V1320.7zM2086.92,1320.7V1310.39H2088.33V1320.7zM2088.03,1320.7V1310.39H2089.45V1320.7zM2089.15,1320.7V1310.39H2090.56V1320.7zM2090.26,1320.7V1315.44H2091.68V1320.7zM2091.38,1320.7V1310.39H2092.79V1320.7zM2092.49,1320.7V1315.44H2093.91V1320.7zM2093.61,1320.7V1310.39H2095.02V1320.7zM2094.72,1320.7V1310.39H2096.14V1320.7zM2095.84,1320.7V1315.44H2097.25V1320.7zM2096.95,1320.7V1315.44H2098.37V1320.7zM2098.07,1320.7V1315.44H2099.48V1320.7zM2099.18,1320.7V1315.44H2100.60V1320.7zM2100.30,1320.7V1315.44H2101.71V1320.7zM2101.41,1320.7V1310.39H2102.83V1320.7zM2102.53,1320.7V1315.44H2103.94V1320.7zM2103.64,1320.7V1315.44H2105.06V1320.7zM2104.76,1320.7V1315.44H2106.18V1320.7zM2105.88,1320.7V1315.44H2107.29V1320.7zM2106.99,1320.7V1310.39H2108.41V1320.7zM2108.11,1320.7V1315.44H2109.52V1320.7zM2109.22,1320.7V1315.44H2110.64V1320.7zM2110.34,1320.7V1315.44H2111.75V1320.7zM2111.45,1320.7V1315.44H2112.87V1320.7zM2112.57,1320.7V1315.44H2113.98V1320.7zM2113.68,1320.7V1315.44H2115.10V1320.7zM2114.80,1320.7V1310.39H2116.21V1320.7zM2115.91,1320.7V1315.44H2117.33V1320.7zM2117.03,1320.7V1315.44H2118.44V1320.7zM2118.14,1320.7V1315.44H2119.56V1320.7zM2119.26,1320.7V1315.44H2120.67V1320.7zM2120.37,1320.7V1310.39H2121.79V1320.7zM2121.49,1320.7V1315.44H2122.90V1320.7zM2122.60,1320.7V1315.44H2124.02V1320.7zM2123.72,1320.7V1310.39H2125.13V1320.7zM2124.83,1320.7V1315.44H2126.25V1320.7zM2125.95,1320.7V1315.44H2127.37V1320.7zM2127.07,1320.7V1310.39H2128.48V1320.7zM2128.18,1320.7V1315.44H2129.60V1320.7zM2129.30,1320.7V1315.44H2130.71V1320.7zM2130.41,1320.7V1315.44H2131.83V1320.7zM2131.53,1320.7V1310.39H2132.94V1320.7zM2132.64,1320.7V1315.44H2134.06V1320.7zM2133.76,1320.7V1315.44H2135.17V1320.7zM2134.87,1320.7V1310.39H2136.29V1320.7zM2135.99,1320.7V1315.44H2137.40V1320.7zM2137.10,1320.7V1315.44H2138.52V1320.7zM2138.22,1320.7V1315.44H2139.63V1320.7zM2139.33,1320.7V1315.44H2140.75V1320.7zM2140.45,1320.7V1315.44H2141.86V1320.7zM2141.56,1320.7V1315.44H2142.98V1320.7zM2142.68,1320.7V1310.39H2144.09V1320.7zM2143.79,1320.7V1315.44H2145.21V1320.7zM2144.91,1320.7V1315.44H2146.33V1320.7zM2146.03,1320.7V1315.44H2147.44V1320.7zM2147.14,1320.7V1315.44H2148.56V1320.7zM2148.26,1320.7V1315.44H2149.67V1320.7zM2149.37,1320.7V1315.44H2150.79V1320.7zM2150.49,1320.7V1310.39H2151.90V1320.7zM2151.60,1320.7V1315.44H2153.02V1320.7zM2152.72,1320.7V1315.44H2154.13V1320.7zM2153.83,1320.7V1315.44H2155.25V1320.7zM2154.95,1320.7V1315.44H2156.36V1320.7zM2156.06,1320.7V1315.44H2157.48V1320.7zM2157.18,1320.7V1315.44H2158.59V1320.7zM2158.29,1320.7V1315.44H2159.71V1320.7zM2159.41,1320.7V1310.39H2160.82V1320.7zM2160.52,1320.7V1315.44H2161.94V1320.7zM2161.64,1320.7V1315.44H2163.05V1320.7zM2162.75,1320.7V1315.44H2164.17V1320.7zM2163.87,1320.7V1310.39H2165.28V1320.7zM2164.98,1320.7V1315.44H2166.40V1320.7zM2166.10,1320.7V1315.44H2167.52V1320.7zM2167.22,1320.7V1315.44H2168.63V1320.7zM2168.33,1320.7V1310.39H2169.75V1320.7zM2169.45,1320.7V1315.44H2170.86V1320.7zM2170.56,1320.7V1315.44H2171.98V1320.7zM2171.68,1320.7V1310.39H2173.09V1320.7zM2172.79,1320.7V1315.44H2174.21V1320.7zM2173.91,1320.7V1310.39H2175.32V1320.7z" fill="#9fecc4"/>
<path d="M247.82,1320.7V1300.28H249.24V1320.7zM248.94,1320.7V1300.28H250.35V1320.7zM250.05,1320.7V1280.06H251.47V1320.7zM251.17,1320.7V1224.45H252.58V1320.7zM252.28,1320.7V1057.64H253.70V1320.7zM253.40,1320.7V1062.69H254.81V1320.7zM254.51,1320.7V1062.69H255.93V1320.7zM255.63,1320.7V1017.20H257.04V1320.7zM256.74,1320.7V1017.20H258.16V1320.7zM257.86,1320.7V1017.20H259.28V1320.7zM258.98,1320.7V966.65H260.39V1320.7zM260.09,1320.7V1103.13H261.51V1320.7zM261.21,1320.7V1103.13H262.62V1320.7zM262.32,1320.7V1123.36H263.74V1320.7zM263.44,1320.7V1123.36H264.85V1320.7zM264.55,1320.7V976.76H265.97V1320.7zM265.67,1320.7V1047.53H267.08V1320.7zM266.78,1320.7V1047.53H268.20V1320.7zM267.90,1320.7V1189.07H269.31V1320.7zM269.01,1320.7V1189.07H270.43V1320.7zM270.13,1320.7V1062.69H271.54V1320.7zM271.24,1320.7V1062.69H272.66V1320.7zM272.36,1320.7V946.43H273.77V1320.7zM273.47,1320.7V946.43H274.89V1320.7zM274.59,1320.7V971.71H276.00V1320.7zM275.70,1320.7V1168.85H277.12V1320.7zM276.82,1320.7V1168.85H278.23V1320.7zM277.93,1320.7V1199.18H279.35V1320.7zM279.05,1320.7V1219.40H280.47V1320.7zM280.17,1320.7V1219.40H281.58V1320.7zM281.28,1320.7V1113.24H282.70V1320.7zM282.40,1320.7V1113.24H283.81V1320.7zM283.51,1320.7V1209.29H284.93V1320.7zM284.63,1320.7V1209.29H286.04V1320.7zM285.74,1320.7V1032.37H287.16V1320.7zM286.86,1320.7V1042.47H288.27V1320.7zM287.97,1320.7V1042.47H289.39V1320.7zM289.09,1320.7V1219.40H290.50V1320.7zM290.20,1320.7V1219.40H291.62V1320.7zM291.32,1320.7V1219.40H292.73V1320.7zM292.43,1320.7V971.71H293.85V1320.7zM293.55,1320.7V971.71H294.96V1320.7zM294.66,1320.7V900.93H296.08V1320.7zM295.78,1320.7V900.93H297.19V1320.7zM296.89,1320.7V1052.59H298.31V1320.7zM298.01,1320.7V1032.37H299.43V1320.7zM299.13,1320.7V1037.42H300.54V1320.7zM300.24,1320.7V1037.42H301.66V1320.7zM301.36,1320.7V1002.04H302.77V1320.7zM302.47,1320.7V1002.04H303.89V1320.7zM303.59,1320.7V1082.91H305.00V1320.7zM304.70,1320.7V1082.91H306.12V1320.7zM305.82,1320.7V946.43H307.23V1320.7zM306.93,1320.7V946.43H308.35V1320.7zM308.05,1320.7V1037.42H309.46V1320.7zM309.16,1320.7V1098.08H310.58V1320.7zM310.28,1320.7V1098.08H311.69V1320.7zM311.39,1320.7V1057.64H312.81V1320.7zM312.51,1320.7V1057.64H313.92V1320.7zM313.62,1320.7V1062.69H315.04V1320.7zM314.74,1320.7V1153.68H316.15V1320.7zM315.85,1320.7V1153.68H317.27V1320.7zM316.97,1320.7V1229.51H318.38V1320.7zM318.08,1320.7V1259.84H319.50V1320.7zM319.20,1320.7V1259.84H320.62V1320.7zM320.32,1320.7V1269.95H321.73V1320.7zM321.43,1320.7V1280.06H322.85V1320.7zM322.55,1320.7V1280.06H323.96V1320.7zM323.66,1320.7V1275.01H325.08V1320.7zM324.78,1320.7V1264.89H326.19V1320.7zM325.89,1320.7V1264.89H327.31V1320.7zM327.01,1320.7V1269.95H328.42V1320.7zM328.12,1320.7V1269.95H329.54V1320.7zM329.24,1320.7V1264.89H330.65V1320.7zM330.35,1320.7V1280.06H331.77V1320.7zM331.47,1320.7V1280.06H332.88V1320.7zM332.58,1320.7V1077.86H334.00V1320.7zM333.70,1320.7V1032.37H335.11V1320.7zM334.81,1320.7V1224.45H336.23V1320.7zM335.93,1320.7V1224.45H337.34V1320.7zM337.04,1320.7V1184.02H338.46V1320.7zM338.16,1320.7V1194.12H339.58V1320.7zM339.28,1320.7V1194.12H340.69V1320.7zM340.39,1320.7V1234.57H341.81V1320.7zM341.51,1320.7V1168.85H342.92V1320.7zM342.62,1320.7V1087.97H344.04V1320.7zM343.74,1320.7V1204.24H345.15V1320.7zM344.85,1320.7V1204.24H346.27V1320.7zM345.97,1320.7V1138.52H347.38V1320.7zM347.08,1320.7V1168.85H348.50V1320.7zM348.20,1320.7V1087.97H349.61V1320.7zM349.31,1320.7V1087.97H350.73V1320.7zM350.43,1320.7V1199.18H351.84V1320.7zM351.54,1320.7V1173.90H352.96V1320.7zM352.66,1320.7V1173.90H354.07V1320.7zM353.77,1320.7V1158.74H355.19V1320.7zM354.89,1320.7V1158.74H356.30V1320.7zM356.00,1320.7V1199.18H357.42V1320.7zM357.12,1320.7V1199.18H358.53V1320.7zM358.23,1320.7V1113.24H359.65V1320.7zM359.35,1320.7V1113.24H360.77V1320.7zM360.47,1320.7V1204.24H361.88V1320.7zM361.58,1320.7V1204.24H363.00V1320.7zM362.70,1320.7V1244.67H364.11V1320.7zM363.81,1320.7V1249.73H365.23V1320.7zM364.93,1320.7V1249.73H366.34V1320.7zM366.04,1320.7V1118.30H367.46V1320.7zM367.16,1320.7V1118.30H368.57V1320.7zM368.27,1320.7V1118.30H369.69V1320.7zM369.39,1320.7V1087.97H370.80V1320.7zM370.50,1320.7V1173.90H371.92V1320.7zM371.62,1320.7V1173.90H373.03V1320.7zM372.73,1320.7V1214.35H374.15V1320.7zM373.85,1320.7V1239.62H375.26V1320.7zM374.96,1320.7V1244.67H376.38V1320.7zM376.08,1320.7V1244.67H377.49V1320.7zM377.19,1320.7V1254.79H378.61V1320.7zM378.31,1320.7V1249.73H379.73V1320.7zM379.43,1320.7V1249.73H380.84V1320.7zM380.54,1320.7V1254.79H381.96V1320.7zM381.66,1320.7V1295.22H383.07V1320.7zM382.77,1320.7V1295.22H384.19V1320.7zM383.89,1320.7V1290.17H385.30V1320.7zM385.00,1320.7V1290.17H386.42V1320.7zM386.12,1320.7V1300.28H387.53V1320.7zM387.23,1320.7V1300.28H388.65V1320.7zM388.35,1320.7V1300.28H389.76V1320.7zM389.46,1320.7V1305.34H390.88V1320.7zM390.58,1320.7V1305.34H391.99V1320.7zM391.69,1320.7V1310.39H393.11V1320.7zM392.81,1320.7V1310.39H394.22V1320.7zM393.92,1320.7V1310.39H395.34V1320.7zM1211.42,1320.7V1300.28H1212.84V1320.7zM1212.54,1320.7V1300.28H1213.95V1320.7zM1213.65,1320.7V1300.28H1215.07V1320.7zM1214.77,1320.7V1300.28H1216.18V1320.7zM1215.88,1320.7V1300.28H1217.30V1320.7zM1217.00,1320.7V1300.28H1218.41V1320.7zM1218.11,1320.7V1300.28H1219.53V1320.7zM1219.23,1320.7V1300.28H1220.64V1320.7zM1220.34,1320.7V1300.28H1221.76V1320.7zM1221.46,1320.7V1300.28H1222.88V1320.7zM1222.58,1320.7V1300.28H1223.99V1320.7zM1223.69,1320.7V1300.28H1225.11V1320.7zM1224.81,1320.7V1300.28H1226.22V1320.7zM1225.92,1320.7V1264.89H1227.34V1320.7zM1227.04,1320.7V1275.01H1228.45V1320.7zM1228.15,1320.7V1275.01H1229.57V1320.7zM1229.27,1320.7V1295.22H1230.68V1320.7zM1230.38,1320.7V1244.67H1231.80V1320.7zM1231.50,1320.7V1244.67H1232.91V1320.7zM1232.61,1320.7V1047.53H1234.03V1320.7zM1233.73,1320.7V1012.14H1235.14V1320.7zM1234.84,1320.7V1123.36H1236.26V1320.7zM1235.96,1320.7V1123.36H1237.37V1320.7zM1237.07,1320.7V1204.24H1238.49V1320.7zM1238.19,1320.7V1209.29H1239.60V1320.7zM1239.30,1320.7V1209.29H1240.72V1320.7zM1240.42,1320.7V1194.12H1241.83V1320.7zM1241.53,1320.7V1204.24H1242.95V1320.7zM1242.65,1320.7V1204.24H1244.07V1320.7zM1243.77,1320.7V1219.40H1245.18V1320.7zM1244.88,1320.7V1209.29H1246.30V1320.7zM1246.00,1320.7V1209.29H1247.41V1320.7zM1247.11,1320.7V1108.19H1248.53V1320.7zM1248.23,1320.7V1113.24H1249.64V1320.7zM1249.34,1320.7V1113.24H1250.76V1320.7zM1250.46,1320.7V966.65H1251.87V1320.7zM1251.57,1320.7V890.83H1252.99V1320.7zM1252.69,1320.7V1158.74H1254.10V1320.7zM1253.80,1320.7V1158.74H1255.22V1320.7zM1254.92,1320.7V1234.57H1256.33V1320.7zM1256.03,1320.7V1214.35H1257.45V1320.7zM1257.15,1320.7V1173.90H1258.56V1320.7zM1258.26,1320.7V1173.90H1259.68V1320.7zM1259.38,1320.7V961.60H1260.79V1320.7zM1260.49,1320.7V1113.24H1261.91V1320.7zM1261.61,1320.7V1113.24H1263.03V1320.7zM1262.73,1320.7V1209.29H1264.14V1320.7zM1263.84,1320.7V1209.29H1265.26V1320.7zM1264.96,1320.7V996.98H1266.37V1320.7zM1266.07,1320.7V1057.64H1267.49V1320.7zM1267.19,1320.7V1057.64H1268.60V1320.7zM1268.30,1320.7V1234.57H1269.72V1320.7zM1269.42,1320.7V1234.57H1270.83V1320.7zM1270.53,1320.7V1234.57H1271.95V1320.7zM1271.65,1320.7V1239.62H1273.06V1320.7zM1272.76,1320.7V1239.62H1274.18V1320.7zM1273.88,1320.7V1239.62H1275.29V1320.7zM1274.99,1320.7V1143.58H1276.41V1320.7zM1276.11,1320.7V885.77H1277.52V1320.7zM1277.22,1320.7V1148.63H1278.64V1320.7zM1278.34,1320.7V1148.63H1279.75V1320.7zM1279.45,1320.7V1194.12H1280.87V1320.7zM1280.57,1320.7V1184.02H1281.98V1320.7zM1281.68,1320.7V1184.02H1283.10V1320.7zM1282.80,1320.7V1194.12H1284.22V1320.7zM1283.92,1320.7V1194.12H1285.33V1320.7zM1285.03,1320.7V1204.24H1286.45V1320.7zM1286.15,1320.7V1204.24H1287.56V1320.7zM1287.26,1320.7V1173.90H1288.68V1320.7zM1288.38,1320.7V1123.36H1289.79V1320.7zM1289.49,1320.7V1234.57H1290.91V1320.7zM1290.61,1320.7V1234.57H1292.02V1320.7zM1291.72,1320.7V1239.62H1293.14V1320.7zM1292.84,1320.7V1239.62H1294.25V1320.7zM1293.95,1320.7V1239.62H1295.37V1320.7zM1295.07,1320.7V1239.62H1296.48V1320.7zM1296.18,1320.7V1239.62H1297.60V1320.7zM1297.30,1320.7V1199.18H1298.71V1320.7zM1298.41,1320.7V1199.18H1299.83V1320.7zM1299.53,1320.7V1204.24H1300.94V1320.7zM1300.64,1320.7V1229.51H1302.06V1320.7zM1301.76,1320.7V1229.51H1303.18V1320.7zM1302.88,1320.7V1234.57H1304.29V1320.7zM1303.99,1320.7V1239.62H1305.41V1320.7zM1305.11,1320.7V1239.62H1306.52V1320.7zM1306.22,1320.7V1239.62H1307.64V1320.7zM1307.34,1320.7V1239.62H1308.75V1320.7zM1308.45,1320.7V1249.73H1309.87V1320.7zM1309.57,1320.7V1244.67H1310.98V1320.7zM1310.68,1320.7V1244.67H1312.10V1320.7zM1311.80,1320.7V1244.67H1313.21V1320.7zM1312.91,1320.7V1244.67H1314.33V1320.7zM1314.03,1320.7V1224.45H1315.44V1320.7zM1315.14,1320.7V1199.18H1316.56V1320.7zM1316.26,1320.7V1148.63H1317.67V1320.7zM1317.37,1320.7V1158.74H1318.79V1320.7zM1318.49,1320.7V1158.74H1319.90V1320.7zM1319.60,1320.7V1057.64H1321.02V1320.7zM1320.72,1320.7V1163.80H1322.13V1320.7zM1321.83,1320.7V1163.80H1323.25V1320.7zM1322.95,1320.7V1244.67H1324.37V1320.7zM1324.07,1320.7V1249.73H1325.48V1320.7zM1325.18,1320.7V1254.79H1326.60V1320.7zM1326.30,1320.7V1254.79H1327.71V1320.7zM1327.41,1320.7V1229.51H1328.83V1320.7zM1328.53,1320.7V1234.57H1329.94V1320.7zM1329.64,1320.7V1234.57H1331.06V1320.7zM1330.76,1320.7V1239.62H1332.17V1320.7zM1331.87,1320.7V1234.57H1333.29V1320.7zM1332.99,1320.7V1234.57H1334.40V1320.7zM1334.10,1320.7V1239.62H1335.52V1320.7zM1335.22,1320.7V1239.62H1336.63V1320.7zM1336.33,1320.7V1244.67H1337.75V1320.7zM1337.45,1320.7V1244.67H1338.86V1320.7zM1338.56,1320.7V1244.67H1339.98V1320.7zM1339.68,1320.7V1244.67H1341.09V1320.7zM1340.79,1320.7V1244.67H1342.21V1320.7zM1341.91,1320.7V1249.73H1343.33V1320.7zM1343.03,1320.7V1249.73H1344.44V1320.7zM1344.14,1320.7V1234.57H1345.56V1320.7zM1345.26,1320.7V1234.57H1346.67V1320.7zM1346.37,1320.7V1234.57H1347.79V1320.7zM1347.49,1320.7V1234.57H1348.90V1320.7zM1348.60,1320.7V1234.57H1350.02V1320.7zM1349.72,1320.7V1244.67H1351.13V1320.7zM1350.83,1320.7V1244.67H1352.25V1320.7zM1351.95,1320.7V1244.67H1353.36V1320.7zM1353.06,1320.7V1244.67H1354.48V1320.7zM1354.18,1320.7V1244.67H1355.59V1320.7zM1355.29,1320.7V1244.67H1356.71V1320.7zM1356.41,1320.7V1254.79H1357.82V1320.7zM1357.52,1320.7V1300.28H1358.94V1320.7zM1532.62,1320.7V1300.28H1534.04V1320.7zM1533.74,1320.7V1300.28H1535.15V1320.7zM1534.85,1320.7V1300.28H1536.27V1320.7zM1535.97,1320.7V1300.28H1537.38V1320.7zM1537.08,1320.7V1300.28H1538.50V1320.7zM1538.20,1320.7V1300.28H1539.61V1320.7zM1539.31,1320.7V1300.28H1540.73V1320.7zM1540.43,1320.7V1259.84H1541.84V1320.7zM1541.54,1320.7V1259.84H1542.96V1320.7zM1542.66,1320.7V1234.57H1544.08V1320.7zM1543.78,1320.7V1209.29H1545.19V1320.7zM1544.89,1320.7V1229.51H1546.31V1320.7zM1546.01,1320.7V1158.74H1547.42V1320.7zM1547.12,1320.7V1158.74H1548.54V1320.7zM1548.24,1320.7V971.71H1549.65V1320.7zM1549.35,1320.7V931.27H1550.77V1320.7zM1550.47,1320.7V971.71H1551.88V1320.7zM1551.58,1320.7V1042.47H1553.00V1320.7zM1552.70,1320.7V1042.47H1554.11V1320.7zM1553.81,1320.7V1042.47H1555.23V1320.7zM1554.93,1320.7V1128.41H1556.34V1320.7zM1556.04,1320.7V1219.40H1557.46V1320.7zM1557.16,1320.7V1108.19H1558.57V1320.7zM1558.27,1320.7V1108.19H1559.69V1320.7zM1559.39,1320.7V1007.09H1560.80V1320.7zM1560.50,1320.7V1098.08H1561.92V1320.7zM1561.62,1320.7V1209.29H1563.03V1320.7zM1562.73,1320.7V1082.91H1564.15V1320.7zM1563.85,1320.7V1082.91H1565.27V1320.7zM1564.97,1320.7V1214.35H1566.38V1320.7zM1566.08,1320.7V1244.67H1567.50V1320.7zM1567.20,1320.7V1244.67H1568.61V1320.7zM1568.31,1320.7V1244.67H1569.73V1320.7zM1569.43,1320.7V1249.73H1570.84V1320.7zM1570.54,1320.7V1042.47H1571.96V1320.7zM1571.66,1320.7V996.98H1573.07V1320.7zM1572.77,1320.7V1234.57H1574.19V1320.7zM1573.89,1320.7V1234.57H1575.30V1320.7zM1575.00,1320.7V1224.45H1576.42V1320.7zM1576.12,1320.7V1234.57H1577.53V1320.7zM1577.23,1320.7V1234.57H1578.65V1320.7zM1578.35,1320.7V1163.80H1579.76V1320.7zM1579.46,1320.7V1098.08H1580.88V1320.7zM1580.58,1320.7V976.76H1581.99V1320.7zM1581.69,1320.7V976.76H1583.11V1320.7zM1582.81,1320.7V1037.42H1584.23V1320.7zM1583.93,1320.7V1199.18H1585.34V1320.7zM1585.04,1320.7V1138.52H1586.46V1320.7zM1586.16,1320.7V1113.24H1587.57V1320.7zM1587.27,1320.7V1113.24H1588.69V1320.7zM1588.39,1320.7V1209.29H1589.80V1320.7zM1589.50,1320.7V1219.40H1590.92V1320.7zM1590.62,1320.7V1163.80H1592.03V1320.7zM1591.73,1320.7V1158.74H1593.15V1320.7zM1592.85,1320.7V1158.74H1594.26V1320.7zM1593.96,1320.7V1214.35H1595.38V1320.7zM1595.08,1320.7V1259.84H1596.49V1320.7zM1596.19,1320.7V1204.24H1597.61V1320.7zM1597.31,1320.7V986.87H1598.72V1320.7zM1598.42,1320.7V986.87H1599.84V1320.7zM1599.54,1320.7V1163.80H1600.95V1320.7zM1600.65,1320.7V1209.29H1602.07V1320.7zM1601.77,1320.7V1209.29H1603.18V1320.7zM1602.88,1320.7V1209.29H1604.30V1320.7zM1604.00,1320.7V1184.02H1605.42V1320.7zM1605.12,1320.7V1264.89H1606.53V1320.7zM1606.23,1320.7V1269.95H1607.65V1320.7zM1607.35,1320.7V1269.95H1608.76V1320.7zM1608.46,1320.7V1269.95H1609.88V1320.7zM1609.58,1320.7V1269.95H1610.99V1320.7zM1610.69,1320.7V1269.95H1612.11V1320.7zM1611.81,1320.7V1269.95H1613.22V1320.7zM1612.92,1320.7V1269.95H1614.34V1320.7zM1614.04,1320.7V1269.95H1615.45V1320.7zM1615.15,1320.7V1269.95H1616.57V1320.7zM1616.27,1320.7V1259.84H1617.68V1320.7zM1617.38,1320.7V1254.79H1618.80V1320.7zM1618.50,1320.7V1254.79H1619.91V1320.7zM1619.61,1320.7V1229.51H1621.03V1320.7zM1620.73,1320.7V1062.69H1622.14V1320.7zM1621.84,1320.7V971.71H1623.26V1320.7zM1622.96,1320.7V1178.96H1624.38V1320.7zM1624.08,1320.7V1178.96H1625.49V1320.7zM1625.19,1320.7V1219.40H1626.61V1320.7zM1626.31,1320.7V1214.35H1627.72V1320.7zM1627.42,1320.7V1214.35H1628.84V1320.7zM1628.54,1320.7V1037.42H1629.95V1320.7zM1629.65,1320.7V860.50H1631.07V1320.7zM1630.77,1320.7V860.50H1632.18V1320.7zM1631.88,1320.7V1098.08H1633.30V1320.7zM1633.00,1320.7V996.98H1634.41V1320.7zM1634.11,1320.7V1002.04H1635.53V1320.7zM1635.23,1320.7V1103.13H1636.64V1320.7zM1636.34,1320.7V976.76H1637.76V1320.7zM1637.46,1320.7V1173.90H1638.87V1320.7zM1638.57,1320.7V1173.90H1639.99V1320.7zM1639.69,1320.7V1219.40H1641.10V1320.7zM1640.80,1320.7V1082.91H1642.22V1320.7zM1641.92,1320.7V1002.04H1643.33V1320.7zM1643.03,1320.7V1118.30H1644.45V1320.7zM1644.15,1320.7V1168.85H1645.57V1320.7zM1645.27,1320.7V1209.29H1646.68V1320.7zM1646.38,1320.7V1209.29H1647.80V1320.7zM1647.50,1320.7V1209.29H1648.91V1320.7zM1648.61,1320.7V1194.12H1650.03V1320.7zM1649.73,1320.7V1194.12H1651.14V1320.7zM1650.84,1320.7V1199.18H1652.26V1320.7zM1651.96,1320.7V1184.02H1653.37V1320.7zM1653.07,1320.7V1184.02H1654.49V1320.7zM1654.19,1320.7V1178.96H1655.60V1320.7zM1655.30,1320.7V1178.96H1656.72V1320.7zM1656.42,1320.7V1178.96H1657.83V1320.7zM1657.53,1320.7V1148.63H1658.95V1320.7zM1658.65,1320.7V1123.36H1660.06V1320.7zM1659.76,1320.7V1219.40H1661.18V1320.7zM1660.88,1320.7V1239.62H1662.29V1320.7zM1661.99,1320.7V1239.62H1663.41V1320.7zM1663.11,1320.7V1239.62H1664.53V1320.7zM1664.23,1320.7V1219.40H1665.64V1320.7zM1665.34,1320.7V1239.62H1666.76V1320.7zM1666.46,1320.7V1229.51H1667.87V1320.7zM1667.57,1320.7V1229.51H1668.99V1320.7zM1668.69,1320.7V1219.40H1670.10V1320.7zM1669.80,1320.7V1062.69H1671.22V1320.7zM1670.92,1320.7V1138.52H1672.33V1320.7zM1672.03,1320.7V1239.62H1673.45V1320.7zM1673.15,1320.7V1249.73H1674.56V1320.7zM1674.26,1320.7V1189.07H1675.68V1320.7zM1675.38,1320.7V1189.07H1676.79V1320.7zM1676.49,1320.7V1239.62H1677.91V1320.7zM1677.61,1320.7V1300.28H1679.02V1320.7zM1678.72,1320.7V1300.28H1680.14V1320.7zM1853.82,1320.7V1305.34H1855.24V1320.7zM1854.94,1320.7V1305.34H1856.35V1320.7zM1856.05,1320.7V1305.34H1857.47V1320.7zM1857.17,1320.7V1305.34H1858.58V1320.7zM1858.28,1320.7V1305.34H1859.70V1320.7zM1859.40,1320.7V1305.34H1860.81V1320.7zM1860.51,1320.7V1305.34H1861.93V1320.7zM1861.63,1320.7V1275.01H1863.04V1320.7zM1862.74,1320.7V1264.89H1864.16V1320.7zM1863.86,1320.7V1264.89H1865.28V1320.7zM1864.98,1320.7V1062.69H1866.39V1320.7zM1866.09,1320.7V1108.19H1867.51V1320.7zM1867.21,1320.7V1108.19H1868.62V1320.7zM1868.32,1320.7V976.76H1869.74V1320.7zM1869.44,1320.7V1007.09H1870.85V1320.7zM1870.55,1320.7V1007.09H1871.97V1320.7zM1871.67,1320.7V1007.09H1873.08V1320.7zM1872.78,1320.7V1017.20H1874.20V1320.7zM1873.90,1320.7V991.92H1875.31V1320.7zM1875.01,1320.7V1017.20H1876.43V1320.7zM1876.13,1320.7V1052.59H1877.54V1320.7zM1877.24,1320.7V1098.08H1878.66V1320.7zM1878.36,1320.7V1249.73H1879.77V1320.7zM1879.47,1320.7V1249.73H1880.89V1320.7zM1880.59,1320.7V1259.84H1882.00V1320.7zM1881.70,1320.7V1037.42H1883.12V1320.7zM1882.82,1320.7V900.93H1884.23V1320.7zM1883.93,1320.7V1229.51H1885.35V1320.7zM1885.05,1320.7V1229.51H1886.47V1320.7zM1886.17,1320.7V1269.95H1887.58V1320.7zM1887.28,1320.7V1275.01H1888.70V1320.7zM1888.40,1320.7V1269.95H1889.81V1320.7zM1889.51,1320.7V1259.84H1890.93V1320.7zM1890.63,1320.7V1259.84H1892.04V1320.7zM1891.74,1320.7V1204.24H1893.16V1320.7zM1892.86,1320.7V1204.24H1894.27V1320.7zM1893.97,1320.7V1118.30H1895.39V1320.7zM1895.09,1320.7V981.82H1896.50V1320.7zM1896.20,1320.7V1093.03H1897.62V1320.7zM1897.32,1320.7V1093.03H1898.73V1320.7zM1898.43,1320.7V1148.63H1899.85V1320.7zM1899.55,1320.7V1173.90H1900.96V1320.7zM1900.66,1320.7V1093.03H1902.08V1320.7zM1901.78,1320.7V1184.02H1903.19V1320.7zM1902.89,1320.7V1224.45H1904.31V1320.7zM1904.01,1320.7V1234.57H1905.43V1320.7zM1905.13,1320.7V1189.07H1906.54V1320.7zM1906.24,1320.7V1158.74H1907.66V1320.7zM1907.36,1320.7V1037.42H1908.77V1320.7zM1908.47,1320.7V1037.42H1909.89V1320.7zM1909.59,1320.7V1113.24H1911.00V1320.7zM1910.70,1320.7V1113.24H1912.12V1320.7zM1911.82,1320.7V1002.04H1913.23V1320.7zM1912.93,1320.7V1128.41H1914.35V1320.7zM1914.05,1320.7V1123.36H1915.46V1320.7zM1915.16,1320.7V1123.36H1916.58V1320.7zM1916.28,1320.7V1093.03H1917.69V1320.7zM1917.39,1320.7V1123.36H1918.81V1320.7zM1918.51,1320.7V1093.03H1919.92V1320.7zM1919.62,1320.7V1158.74H1921.04V1320.7zM1920.74,1320.7V1168.85H1922.15V1320.7zM1921.85,1320.7V1168.85H1923.27V1320.7zM1922.97,1320.7V1204.24H1924.38V1320.7zM1924.08,1320.7V1224.45H1925.50V1320.7zM1925.20,1320.7V1194.12H1926.62V1320.7zM1926.32,1320.7V1199.18H1927.73V1320.7zM1927.43,1320.7V1244.67H1928.85V1320.7zM1928.55,1320.7V1244.67H1929.96V1320.7zM1929.66,1320.7V1214.35H1931.08V1320.7zM1930.78,1320.7V1148.63H1932.19V1320.7zM1931.89,1320.7V1178.96H1933.31V1320.7zM1933.01,1320.7V1204.24H1934.42V1320.7zM1934.12,1320.7V1209.29H1935.54V1320.7zM1935.24,1320.7V1204.24H1936.65V1320.7zM1936.35,1320.7V1204.24H1937.77V1320.7zM1937.47,1320.7V1209.29H1938.88V1320.7zM1938.58,1320.7V1204.24H1940.00V1320.7zM1939.70,1320.7V1209.29H1941.11V1320.7zM1940.81,1320.7V1204.24H1942.23V1320.7zM1941.93,1320.7V1209.29H1943.34V1320.7zM1943.04,1320.7V1209.29H1944.46V1320.7zM1944.16,1320.7V1199.18H1945.58V1320.7zM1945.28,1320.7V1204.24H1946.69V1320.7zM1946.39,1320.7V1199.18H1947.81V1320.7zM1947.51,1320.7V1168.85H1948.92V1320.7zM1948.62,1320.7V1158.74H1950.04V1320.7zM1949.74,1320.7V1158.74H1951.15V1320.7zM1950.85,1320.7V1168.85H1952.27V1320.7zM1951.97,1320.7V1133.46H1953.38V1320.7zM1953.08,1320.7V1103.13H1954.50V1320.7zM1954.20,1320.7V1062.69H1955.61V1320.7zM1955.31,1320.7V1214.35H1956.73V1320.7zM1956.43,1320.7V1214.35H1957.84V1320.7zM1957.54,1320.7V1184.02H1958.96V1320.7zM1958.66,1320.7V1118.30H1960.07V1320.7zM1959.77,1320.7V1113.24H1961.19V1320.7zM1960.89,1320.7V1113.24H1962.30V1320.7zM1962.00,1320.7V1072.81H1963.42V1320.7zM1963.12,1320.7V1158.74H1964.53V1320.7zM1964.23,1320.7V1168.85H1965.65V1320.7zM1965.35,1320.7V1168.85H1966.77V1320.7zM1966.47,1320.7V1189.07H1967.88V1320.7zM1967.58,1320.7V1189.07H1969.00V1320.7zM1968.70,1320.7V1204.24H1970.11V1320.7zM1969.81,1320.7V1204.24H1971.23V1320.7zM1970.93,1320.7V1244.67H1972.34V1320.7zM1972.04,1320.7V1234.57H1973.46V1320.7zM1973.16,1320.7V1234.57H1974.57V1320.7zM1974.27,1320.7V1229.51H1975.69V1320.7zM1975.39,1320.7V1219.40H1976.80V1320.7zM1976.50,1320.7V1148.63H1977.92V1320.7zM1977.62,1320.7V1052.59H1979.03V1320.7zM1978.73,1320.7V1133.46H1980.15V1320.7zM1979.85,1320.7V1148.63H1981.26V1320.7zM1980.96,1320.7V1148.63H1982.38V1320.7zM1982.08,1320.7V1153.68H1983.49V1320.7zM1983.19,1320.7V1168.85H1984.61V1320.7zM1984.31,1320.7V1184.02H1985.73V1320.7zM1985.43,1320.7V1224.45H1986.84V1320.7zM1986.54,1320.7V1158.74H1987.96V1320.7zM1987.66,1320.7V1158.74H1989.07V1320.7zM1988.77,1320.7V1067.75H1990.19V1320.7zM1989.89,1320.7V1158.74H1991.30V1320.7zM1991.00,1320.7V1234.57H1992.42V1320.7zM1992.12,1320.7V1234.57H1993.53V1320.7zM1993.23,1320.7V1229.51H1994.65V1320.7zM1994.35,1320.7V1229.51H1995.76V1320.7zM1995.46,1320.7V1229.51H1996.88V1320.7zM1996.58,1320.7V1234.57H1997.99V1320.7zM1997.69,1320.7V1234.57H1999.11V1320.7zM1998.81,1320.7V1300.28H2000.22V1320.7zM1999.92,1320.7V1249.73H2001.34V1320.7zM2175.02,1320.7V1310.39H2176.44V1320.7zM2176.14,1320.7V1305.34H2177.55V1320.7zM2177.25,1320.7V1264.89H2178.67V1320.7zM2178.37,1320.7V1234.57H2179.78V1320.7zM2179.48,1320.7V1037.42H2180.90V1320.7zM2180.60,1320.7V1128.41H2182.01V1320.7zM2181.71,1320.7V1057.64H2183.13V1320.7zM2182.83,1320.7V1012.14H2184.24V1320.7zM2183.94,1320.7V1002.04H2185.36V1320.7zM2185.06,1320.7V1067.75H2186.48V1320.7zM2186.18,1320.7V1163.80H2187.59V1320.7zM2187.29,1320.7V1168.85H2188.71V1320.7zM2188.41,1320.7V1269.95H2189.82V1320.7zM2189.52,1320.7V1275.01H2190.94V1320.7zM2190.64,1320.7V1269.95H2192.05V1320.7zM2191.75,1320.7V1214.35H2193.17V1320.7zM2192.87,1320.7V966.65H2194.28V1320.7zM2193.98,1320.7V1062.69H2195.40V1320.7zM2195.10,1320.7V1082.91H2196.51V1320.7zM2196.21,1320.7V1168.85H2197.63V1320.7zM2197.33,1320.7V986.87H2198.74V1320.7zM2198.44,1320.7V1118.30H2199.86V1320.7zM2199.56,1320.7V1189.07H2200.97V1320.7zM2200.67,1320.7V1082.91H2202.09V1320.7zM2201.79,1320.7V1173.90H2203.20V1320.7zM2202.90,1320.7V1244.67H2204.32V1320.7zM2204.02,1320.7V1148.63H2205.43V1320.7zM2205.13,1320.7V1214.35H2206.55V1320.7zM2206.25,1320.7V1280.06H2207.67V1320.7zM2207.37,1320.7V1275.01H2208.78V1320.7zM2208.48,1320.7V1275.01H2209.90V1320.7zM2209.60,1320.7V1239.62H2211.01V1320.7zM2210.71,1320.7V1022.25H2212.13V1320.7zM2211.83,1320.7V1082.91H2213.24V1320.7zM2212.94,1320.7V1244.67H2214.36V1320.7zM2214.06,1320.7V1280.06H2215.47V1320.7zM2215.17,1320.7V1280.06H2216.59V1320.7zM2216.29,1320.7V1239.62H2217.70V1320.7zM2217.40,1320.7V926.21H2218.82V1320.7zM2218.52,1320.7V1067.75H2219.93V1320.7zM2219.63,1320.7V1259.84H2221.05V1320.7zM2220.75,1320.7V1254.79H2222.16V1320.7zM2221.86,1320.7V1259.84H2223.28V1320.7zM2222.98,1320.7V1249.73H2224.39V1320.7zM2224.09,1320.7V1194.12H2225.51V1320.7zM2225.21,1320.7V1022.25H2226.63V1320.7zM2226.33,1320.7V1027.31H2227.74V1320.7zM2227.44,1320.7V1143.58H2228.86V1320.7zM2228.56,1320.7V1189.07H2229.97V1320.7zM2229.67,1320.7V1264.89H2231.09V1320.7zM2230.79,1320.7V1269.95H2232.20V1320.7zM2231.90,1320.7V1285.12H2233.32V1320.7zM2233.02,1320.7V1280.06H2234.43V1320.7zM2234.13,1320.7V1199.18H2235.55V1320.7zM2235.25,1320.7V1128.41H2236.66V1320.7zM2236.36,1320.7V1057.64H2237.78V1320.7zM2237.48,1320.7V1012.14H2238.89V1320.7zM2238.59,1320.7V1027.31H2240.01V1320.7zM2239.71,1320.7V1168.85H2241.12V1320.7zM2240.82,1320.7V1219.40H2242.24V1320.7zM2241.94,1320.7V1239.62H2243.35V1320.7zM2243.05,1320.7V1249.73H2244.47V1320.7zM2244.17,1320.7V1224.45H2245.58V1320.7zM2245.28,1320.7V946.43H2246.70V1320.7zM2246.40,1320.7V1027.31H2247.82V1320.7zM2247.52,1320.7V1093.03H2248.93V1320.7zM2248.63,1320.7V1199.18H2250.05V1320.7zM2249.75,1320.7V1189.07H2251.16V1320.7zM2250.86,1320.7V1199.18H2252.28V1320.7zM2251.98,1320.7V1209.29H2253.39V1320.7zM2253.09,1320.7V1244.67H2254.51V1320.7zM2254.21,1320.7V1280.06H2255.62V1320.7zM2255.32,1320.7V1244.67H2256.74V1320.7zM2256.44,1320.7V1093.03H2257.85V1320.7zM2257.55,1320.7V1047.53H2258.97V1320.7zM2258.67,1320.7V1128.41H2260.08V1320.7zM2259.78,1320.7V1057.64H2261.20V1320.7zM2260.90,1320.7V1178.96H2262.31V1320.7zM2262.01,1320.7V1178.96H2263.43V1320.7zM2263.13,1320.7V1249.73H2264.54V1320.7zM2264.24,1320.7V1249.73H2265.66V1320.7zM2265.36,1320.7V1244.67H2266.78V1320.7zM2266.48,1320.7V1249.73H2267.89V1320.7zM2267.59,1320.7V1249.73H2269.01V1320.7zM2268.71,1320.7V1143.58H2270.12V1320.7zM2269.82,1320.7V1173.90H2271.24V1320.7zM2270.94,1320.7V1108.19H2272.35V1320.7zM2272.05,1320.7V1158.74H2273.47V1320.7zM2273.17,1320.7V1077.86H2274.58V1320.7zM2274.28,1320.7V1093.03H2275.70V1320.7zM2275.40,1320.7V1219.40H2276.81V1320.7zM2276.51,1320.7V1118.30H2277.93V1320.7zM2277.63,1320.7V991.92H2279.04V1320.7zM2278.74,1320.7V1017.20H2280.16V1320.7zM2279.86,1320.7V1209.29H2281.27V1320.7zM2280.97,1320.7V1224.45H2282.39V1320.7zM2282.09,1320.7V1239.62H2283.50V1320.7zM2283.20,1320.7V1229.51H2284.62V1320.7zM2284.32,1320.7V1224.45H2285.73V1320.7zM2285.43,1320.7V1229.51H2286.85V1320.7zM2286.55,1320.7V1158.74H2287.97V1320.7zM2287.67,1320.7V1123.36H2289.08V1320.7zM2288.78,1320.7V1098.08H2290.20V1320.7zM2289.90,1320.7V1032.37H2291.31V1320.7zM2291.01,1320.7V1002.04H2292.43V1320.7zM2292.13,1320.7V1158.74H2293.54V1320.7zM2293.24,1320.7V1229.51H2294.66V1320.7zM2294.36,1320.7V1133.46H2295.77V1320.7zM2295.47,1320.7V1143.58H2296.89V1320.7zM2296.59,1320.7V1249.73H2298.00V1320.7zM2297.70,1320.7V1037.42H2299.12V1320.7zM2298.82,1320.7V1103.13H2300.23V1320.7zM2299.93,1320.7V1047.53H2301.35V1320.7zM2301.05,1320.7V1138.52H2302.46V1320.7zM2302.16,1320.7V1158.74H2303.58V1320.7zM2303.28,1320.7V1224.45H2304.69V1320.7zM2304.39,1320.7V1214.35H2305.81V1320.7zM2305.51,1320.7V1194.12H2306.93V1320.7zM2306.63,1320.7V1178.96H2308.04V1320.7zM2307.74,1320.7V1189.07H2309.16V1320.7zM2308.86,1320.7V1209.29H2310.27V1320.7zM2309.97,1320.7V1234.57H2311.39V1320.7zM2311.09,1320.7V1113.24H2312.50V1320.7z" fill="#23916f" fill-opacity="0.97"/>
<path d="M167.4,815.0V1321.4" stroke="#484848" stroke-width="1.5" fill="none"/>
<path d="M157,1320.9H168" stroke="#8a8a8a" stroke-width="1.3" fill="none"/>
<path d="M166.7,1320.9H2416.6" stroke="#7c7c7c" stroke-width="1.4" fill="none"/>
<path d="M168.20,1321.7v11M489.40,1321.7v11M810.60,1321.7v11M1131.80,1321.7v11M1453.00,1321.7v11M1774.20,1321.7v11M2095.40,1321.7v11" stroke="#a0a0a0" stroke-width="1.4" fill="none"/>
<text x="168.80" y="1357.00" font-size="19.8" text-anchor="middle" fill="#1c1c1c" textLength="74.69" lengthAdjust="spacingAndGlyphs">ven. 10</text>
<text x="490.00" y="1357.00" font-size="19.8" text-anchor="middle" fill="#1c1c1c" textLength="80.01" lengthAdjust="spacingAndGlyphs">sam. 11</text>
<text x="811.20" y="1357.00" font-size="19.8" text-anchor="middle" fill="#1c1c1c" textLength="75.65" lengthAdjust="spacingAndGlyphs">dim. 12</text>
<text x="1132.40" y="1357.00" font-size="19.8" text-anchor="middle" fill="#1c1c1c" textLength="69.24" lengthAdjust="spacingAndGlyphs">lun. 13</text>
<text x="1453.60" y="1357.00" font-size="19.8" text-anchor="middle" fill="#1c1c1c" textLength="78.19" lengthAdjust="spacingAndGlyphs">mar. 14</text>
<text x="1774.80" y="1357.00" font-size="19.8" text-anchor="middle" fill="#1c1c1c" textLength="78.09" lengthAdjust="spacingAndGlyphs">mer. 15</text>
<text x="2096.00" y="1357.00" font-size="19.8" text-anchor="middle" fill="#1c1c1c" textLength="69.88" lengthAdjust="spacingAndGlyphs">jeu. 16</text>
<text x="145.60" y="1325.70" font-size="17.8" text-anchor="end" fill="#444" textLength="11.92" lengthAdjust="spacingAndGlyphs">0</text>
<text x="145.60" y="1275.65" font-size="17.8" text-anchor="end" fill="#444" textLength="22.94" lengthAdjust="spacingAndGlyphs">10</text>
<text x="145.60" y="1225.10" font-size="17.8" text-anchor="end" fill="#444" textLength="22.94" lengthAdjust="spacingAndGlyphs">20</text>
<text x="145.60" y="1174.55" font-size="17.8" text-anchor="end" fill="#444" textLength="22.94" lengthAdjust="spacingAndGlyphs">30</text>
<text x="145.60" y="1124.00" font-size="17.8" text-anchor="end" fill="#444" textLength="22.94" lengthAdjust="spacingAndGlyphs">40</text>
<text x="145.60" y="1073.45" font-size="17.8" text-anchor="end" fill="#444" textLength="22.94" lengthAdjust="spacingAndGlyphs">50</text>
<text x="145.60" y="1022.90" font-size="17.8" text-anchor="end" fill="#444" textLength="22.94" lengthAdjust="spacingAndGlyphs">60</text>
<text x="145.60" y="972.35" font-size="17.8" text-anchor="end" fill="#444" textLength="22.94" lengthAdjust="spacingAndGlyphs">70</text>
<text x="145.60" y="921.80" font-size="17.8" text-anchor="end" fill="#444" textLength="22.94" lengthAdjust="spacingAndGlyphs">80</text>
<text x="145.60" y="871.25" font-size="17.8" text-anchor="end" fill="#444" textLength="22.94" lengthAdjust="spacingAndGlyphs">90</text>
<text x="145.60" y="820.70" font-size="17.8" text-anchor="end" fill="#444" textLength="33.97" lengthAdjust="spacingAndGlyphs">100</text>
<text transform="translate(85.9,1067.5) rotate(-90)" font-size="22" text-anchor="middle" fill="#444" textLength="29.8" lengthAdjust="spacingAndGlyphs">kW</text>
<g id="ecowatt">
<rect x="176.6" y="49.1" width="481.5" height="77.7" fill="#090917"/>
<defs><clipPath id="ecolow"><path d="M215,560 L300,600 L485,640 V720 H215z M490,520 L570,575 L752,608 V720 H490z M752,500 L840,560 L1032,548 V720 H752z"/></clipPath></defs>
<g transform="translate(165,40) scale(0.10354)" fill="none" stroke-linecap="round" stroke-linejoin="round" stroke-width="68">
<g stroke="#00f3cd"><path d="M446,505 A93,116 0 1 0 423,605 M262,505 H444"/><path d="M335,333 L378,309" stroke-width="56"/><path d="M698,448 A96,116 0 1 0 698,612"/><ellipse cx="890" cy="530" rx="96" ry="116"/></g>
<g stroke="#02b195" clip-path="url(#ecolow)"><path d="M446,505 A93,116 0 1 0 423,605 M262,505 H444"/><path d="M335,333 L378,309" stroke-width="56"/><path d="M698,448 A96,116 0 1 0 698,612"/><ellipse cx="890" cy="530" rx="96" ry="116"/></g>
<g stroke="#fdfdfd"><path d="M1068,462 L1140,646 L1222,418 L1300,646 L1438,276"/><path d="M1470,452 C1505,405 1645,395 1645,500 V646"/><ellipse cx="1548" cy="582" rx="92" ry="70"/><path d="M1757,339 V585 C1757,630 1778,648 1822,646 M1907,339 V585 C1907,630 1928,648 1972,646 M1722,405 H1980"/></g>
</g>
<ellipse cx="433.8" cy="89.1" rx="25.8" ry="28" fill="#00b3e3"/>
<text x="434.6" y="96.8" font-size="23" text-anchor="middle" fill="#fff" textLength="31.5" lengthAdjust="spacingAndGlyphs">Rte</text>
<path d="M419.3,94.6H450.4" stroke="#fff" stroke-width="1.5"/>
<text x="468.2" y="79.6" font-size="12.4" fill="#00a4d8" textLength="48.4" lengthAdjust="spacingAndGlyphs">Le réseau</text>
<text x="468.2" y="93.0" font-size="12.4" fill="#00a4d8" textLength="60.8" lengthAdjust="spacingAndGlyphs">de transport</text>
<text x="468.2" y="105.6" font-size="12.4" fill="#00a4d8" textLength="57" lengthAdjust="spacingAndGlyphs">d’électricité</text>
<rect x="546.6" y="61.1" width="100.6" height="55.9" fill="#fff"/>
<rect x="553" y="68.7" width="8.2" height="6.9" fill="#2a3a8e"/><rect x="564.2" y="68.7" width="7.7" height="6.9" fill="#e1000f"/>
<text x="552.7" y="85.2" font-size="8.8" font-weight="bold" fill="#2a2a2a" textLength="44" lengthAdjust="spacingAndGlyphs">RÉPUBLIQUE</text>
<text x="552.7" y="93.3" font-size="8.8" font-weight="bold" fill="#2a2a2a" textLength="40.6" lengthAdjust="spacingAndGlyphs">FRANÇAISE</text>
<text x="553" y="100.2" font-size="4.2" font-style="italic" fill="#777" textLength="11.8" lengthAdjust="spacingAndGlyphs">Liberté</text>
<text x="553" y="105.1" font-size="4.2" font-style="italic" fill="#777" textLength="12.2" lengthAdjust="spacingAndGlyphs">Égalité</text>
<text x="553" y="110.0" font-size="4.2" font-style="italic" fill="#777" textLength="17" lengthAdjust="spacingAndGlyphs">Fraternité</text>
<rect x="607.1" y="66.8" width="34.8" height="45" fill="#fff" stroke="#4a82cf" stroke-width="1.1"/>
<text x="624.3" y="75.2" font-size="7" font-weight="bold" text-anchor="middle" fill="#e4202c" textLength="25.4" lengthAdjust="spacingAndGlyphs">ADEME</text>
<circle cx="624.4" cy="86.9" r="8.6" fill="#2c50b4"/>
<path d="M620.5,81.5c2,-1.6 4.5,-1 5.2,0.6c0.6,1.6 -1.4,2.4 -1,4c0.4,1.6 2.2,2.2 1.4,4.2c-0.8,1.8 -2.8,1.4 -3.6,-0.4c-0.8,-1.8 -2.8,-2.6 -3,-4.6c-0.1,-1.6 0,-2.8 1,-3.8z M628.6,83.2c1.6,0.2 2.6,1.8 2.4,3.4c-0.2,1.4 -1.4,1.8 -2,0.8c-0.6,-1 -1.4,-2.8 -0.4,-4.2z M625.5,92.2c1,-0.8 2.6,-0.4 2.8,0.8c0.2,1.2 -1.4,2 -2.6,1.4c-0.8,-0.4 -0.8,-1.6 -0.2,-2.2z" fill="#9db2e6"/>
<path d="M611.9,100.9H636.9" stroke="#ea5058" stroke-width="1.8" stroke-dasharray="2.1 0.5 2.6 0.5 1.2 0.5" fill="none"/>
<path d="M611.9,104.4H636.9" stroke="#ea5058" stroke-width="1.8" stroke-dasharray="1.6 0.4 2.2 0.4" fill="none"/>
<path d="M611.9,107.9H636.9" stroke="#ea5058" stroke-width="1.8" stroke-dasharray="1.9 0.4 1.4 0.4 2.4 0.4" fill="none"/>
</g>
<g id="jtable">
<path fill="#dbdbdb" fill-rule="evenodd" d="M169.3,135.4H660.7V258.6H169.3z M172.9,139H288.9V189.2H172.9z M294.4,139H411.6V189.2H294.4z M416.8,139H533.5V189.2H416.8z M538.7,139H655.6V189.2H538.7z M172.9,194.4H288.9V253.4H172.9z M294.4,194.4H411.6V253.4H294.4z M416.8,194.4H533.5V253.4H416.8z M538.7,194.4H655.6V253.4H538.7z"/>
<defs><linearGradient id="wg" x1="0" y1="0" x2="0" y2="1"><stop offset="0" stop-color="#00cfb2"/><stop offset="0.55" stop-color="#00c4a6"/><stop offset="1" stop-color="#00b294"/></linearGradient><g id="wave"><rect width="100" height="100" fill="url(#wg)"/><path d="M15,0 C30,18 42,36 66,43 C80,46 92,38 100,29 V6 C88,16 76,22 62,20 C46,18 36,8 27,0z" fill="#00f0d0"/><path d="M27,0 C36,8 46,18 62,20 C76,22 88,16 100,6 V0z" fill="#00a58c"/></g></defs>
<use href="#wave" transform="translate(180.2,195.2) scale(1.0560,0.5460)"/>
<use href="#wave" transform="translate(302.1,196.2) scale(1.0590,0.5540)"/>
<use href="#wave" transform="translate(423.9,196.2) scale(1.0640,0.5560)"/>
<use href="#wave" transform="translate(544.1,196.2) scale(1.0600,0.5560)"/>
<path transform="translate(222.6,150.9)" d="M14.75,0 V16.4 C14.75,21.1 11.9,22.7 8.3,22.7 C4.7,22.7 2.2,20.3 1.7,16.6" fill="none" stroke="#000" stroke-width="3.9"/>
<path transform="translate(312.7,150.9)" d="M14.75,0 V16.4 C14.75,21.1 11.9,22.7 8.3,22.7 C4.7,22.7 2.2,20.3 1.7,16.6" fill="none" stroke="#000" stroke-width="3.9"/>
<path d="M346.5,164.1h14.6M353.8,155.3v17.6" fill="none" stroke="#000" stroke-width="2.5"/>
<path d="M381.6,159.0 L387.9,153.2 M387.9,151.6 V174.9" fill="none" stroke="#000" stroke-width="2.5"/>
<path transform="translate(435.0,150.9)" d="M14.75,0 V16.4 C14.75,21.1 11.9,22.7 8.3,22.7 C4.7,22.7 2.2,20.3 1.7,16.6" fill="none" stroke="#000" stroke-width="3.9"/>
<path d="M468.59999999999997,164.1h14.6M475.9,155.3v17.6" fill="none" stroke="#000" stroke-width="2.5"/>
<path d="M503.4,158.6 C503.6,152.4 513.6,152.2 513.8,158.6 C513.9,162.4 508.6,166 503.9,172.6 H517.4" fill="none" stroke="#000" stroke-width="4.9" stroke-linejoin="round"/>
<path transform="translate(556.7,150.9)" d="M14.75,0 V16.4 C14.75,21.1 11.9,22.7 8.3,22.7 C4.7,22.7 2.2,20.3 1.7,16.6" fill="none" stroke="#000" stroke-width="3.9"/>
<path d="M590.5,164.1h14.6M597.8,155.3v17.6" fill="none" stroke="#000" stroke-width="2.5"/>
<path d="M624.4,157.6 C625.6,152.6 636.2,152.4 636.4,158 C636.5,161.8 633,163 629.6,163 C634,163 637.4,164.6 637.4,168.6 C637.4,174.6 626,174.8 624.2,169.4" fill="none" stroke="#000" stroke-width="4.5"/>
</g>
<g id="info">
<path d="M1990.7,46H2406V89a9,9 0 0 1 -9,9H1990.7z" fill="#fff"/>
<text x="2198.00" y="88.90" font-size="24.6" text-anchor="middle" fill="#000" font-weight="bold" textLength="173.60" lengthAdjust="spacingAndGlyphs">LHB-site-L629</text>
<rect x="1992.45" y="108.55" width="411.50" height="57.30" rx="8.5" fill="#fff" stroke="#7f7f7f" stroke-width="3.7"/>
<rect x="1992.45" y="178.35" width="411.50" height="57.30" rx="8.5" fill="#fff" stroke="#7f7f7f" stroke-width="3.7"/>
<rect x="1992.45" y="248.55" width="411.50" height="57.40" rx="8.5" fill="#fff" stroke="#7f7f7f" stroke-width="3.7"/>
<text x="2207.30" y="147.90" font-size="28.5" text-anchor="middle" fill="#000" textLength="313.50" lengthAdjust="spacingAndGlyphs">Consommation: 483 kWh</text>
<text x="2206.80" y="217.70" font-size="28.5" text-anchor="middle" fill="#000" textLength="190.60" lengthAdjust="spacingAndGlyphs">P Max :&#160; 78 kW</text>
<text x="2207.20" y="287.60" font-size="28.5" text-anchor="middle" fill="#000" textLength="161.60" lengthAdjust="spacingAndGlyphs">P min : 1 kW</text>
<rect x="562.25" y="806.15" width="411.60" height="57.40" rx="8.5" fill="#fff" stroke="#7f7f7f" stroke-width="3.7"/>
<rect x="1100.05" y="806.15" width="411.60" height="57.40" rx="8.5" fill="#fff" stroke="#7f7f7f" stroke-width="3.7"/>
<rect x="1610.05" y="806.15" width="411.80" height="57.40" rx="8.5" fill="#fff" stroke="#7f7f7f" stroke-width="3.7"/>
<text x="778.20" y="845.50" font-size="28.5" text-anchor="middle" fill="#000" textLength="337.60" lengthAdjust="spacingAndGlyphs">Consommation: 1 783 kWh</text>
<text x="1315.20" y="845.50" font-size="28.5" text-anchor="middle" fill="#000" textLength="192.20" lengthAdjust="spacingAndGlyphs">P Max :&#160; 91 kW</text>
<text x="1825.40" y="845.50" font-size="28.5" text-anchor="middle" fill="#000" textLength="162.60" lengthAdjust="spacingAndGlyphs">P min : 1 kW</text>
</g>
<g id="g2e">
<path d="M2322.4,1322.7H2437.7V1377.6L2430,1379.9H2322.4z" fill="#fff"/>
<g transform="translate(2315,1315) scale(0.052994)">
<path d="M883,559 A243,243 0 1 0 888,679 H655" fill="none" stroke="#0b72b9" stroke-width="95" stroke-linecap="round" stroke-linejoin="round"/>
<path d="M1040,690 C985,585 1060,474 1160,474 C1262,474 1312,560 1272,648 C1250,700 1130,790 1050,866 H1291" fill="none" stroke="#0b72b9" stroke-width="90" stroke-linecap="round" stroke-linejoin="miter"/>
<path d="M1450,183 L1474,183 L1440,385 L1607,440 L1402,912 L1384,912 L1430,500 L1288,440z" fill="#e95a25"/>
<path d="M1660,455H2068L1975,562H1618z M1592,625H1948L1860,737H1543z M1522,800H1922L1815,912H1463z" fill="#f3931f"/>
</g>
<text x="2393.8" y="1334.3" font-size="7" font-weight="bold" fill="#ea6038" textLength="30" lengthAdjust="spacingAndGlyphs">FRANCE</text>
<text x="2339.4" y="1368.6" font-size="3.7" fill="#3d8fcc" textLength="74.6" lengthAdjust="spacingAndGlyphs">Optimisation des ressources énergétiques</text>
</g>
</svg></body></html>
